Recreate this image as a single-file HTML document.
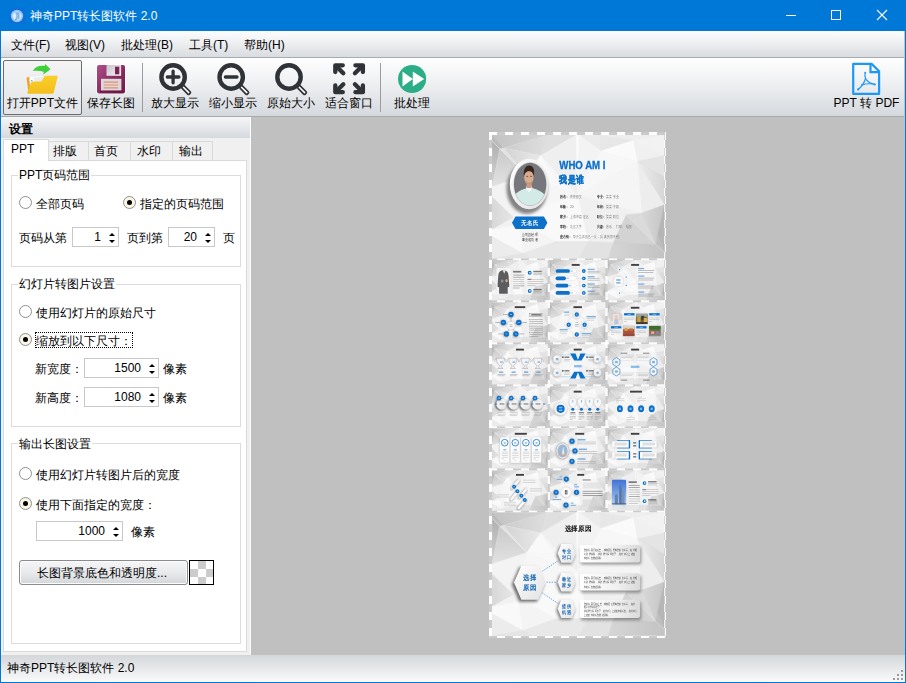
<!DOCTYPE html>
<html lang="zh">
<head>
<meta charset="utf-8">
<title>神奇PPT转长图软件 2.0</title>
<style>
*{box-sizing:border-box;margin:0;padding:0}
html,body{width:906px;height:683px;overflow:hidden;background:#c0c0c0}
body{font-family:"Liberation Sans",sans-serif;font-size:12px;color:#000;position:relative}
.abs,.t{position:absolute}
.t{white-space:nowrap;line-height:14px;height:14px}
#win{position:absolute;left:0;top:0;width:906px;height:683px;background:#c0c0c0;overflow:hidden}
#title{left:0;top:0;width:906px;height:31px;background:#0078d7}
#title .t{color:#fff;font-size:12px}
#menu{left:1px;top:31px;width:904px;height:26px;background:linear-gradient(#fdfdfd 0%,#f0f1f3 40%,#d9dce0 100%)}
#menuline{left:1px;top:57px;width:904px;height:1px;background:#a9abae}
#tool{left:1px;top:58px;width:904px;height:58px;background:linear-gradient(#fefefe 0%,#f2f3f5 35%,#d5d9dd 100%)}
#toolline{left:1px;top:116px;width:904px;height:1px;background:#a6a8ab}
.tb{text-align:center;transform:translateX(-50%)}
.sep{width:1px;background:#9a9ca0;top:63px;height:49px}
#panel{left:1px;top:117px;width:250px;height:538px;background:#f0f0f0}
#hdr{left:1px;top:117px;width:250px;height:21px;background:linear-gradient(#f4f5f6 0%,#e6e8eb 50%,#d5d9de 100%)}
.tab{top:141px;height:19px;background:#f0f0f0;border:1px solid #d9d9d9;border-bottom:none}
.tab .t{top:2px}
#tabc{left:3px;top:160px;width:244px;height:492px;background:#fff;border:1px solid #dadada}
.gb{border:1px solid #dcdcdc;background:transparent}
.gt{background:#fff;padding:0 1px}
.radio{width:13px;height:13px;border-radius:50%;border:1px solid #8e8f8f;background:#fff}
.radio.on{background:#fbf6e4}
.radio.on:after{content:"";position:absolute;left:3px;top:3px;width:5px;height:5px;border-radius:50%;background:#000}
.spin{height:20px;background:#fff;border:1px solid #c8c8c8}
.spin .v{position:absolute;top:2px;line-height:14px;text-align:right;color:#000}
.spin i{position:absolute;width:0;height:0;border-left:3px solid transparent;border-right:3px solid transparent}
.spin i.u{top:5px;border-bottom:3px solid #000}
.spin i.d{top:12px;border-top:3px solid #000}
#status{left:1px;top:655px;width:904px;height:27px;background:linear-gradient(#d3d7da 0%,#e5e7e9 45%,#fafafa 100%)}
</style>
</head>
<body>
<div id="win">
<!-- title bar -->
<div class="abs" id="title">
  <svg class="abs" style="left:9px;top:8px" width="16" height="16" viewBox="0 0 16 16"><rect x="0" y="0" width="16" height="16" rx="3" fill="#0a6fd8"/><circle cx="8" cy="8" r="6.2" fill="#8fc0f2"/><circle cx="8" cy="8" r="4.6" fill="#d8e9fb"/><path d="M6.2 5h3.6v6M8 5v6l-2 .6" stroke="#5b9fe6" stroke-width="1.1" fill="none"/></svg>
  <div class="t" style="left:30px;top:9px">神奇PPT转长图软件 2.0</div>
  <svg class="abs" style="left:780px;top:5px" width="112" height="20" viewBox="0 0 112 20"><path d="M6 10.5h10" stroke="#fff" stroke-width="1"/><rect x="51.5" y="5.5" width="9" height="9" fill="none" stroke="#fff" stroke-width="1"/><path d="M97 5l10 10M107 5l-10 10" stroke="#fff" stroke-width="1.1"/></svg>
</div>
<!-- menu bar -->
<div class="abs" id="menu"></div>
<div class="abs" id="menuline"></div>
<div class="t" style="left:11px;top:38px">文件(F)</div>
<div class="t" style="left:65px;top:38px">视图(V)</div>
<div class="t" style="left:121px;top:38px">批处理(B)</div>
<div class="t" style="left:189px;top:38px">工具(T)</div>
<div class="t" style="left:244px;top:38px">帮助(H)</div>
<!-- toolbar -->
<div class="abs" id="tool"></div>
<div class="abs" id="toolline"></div>
<div class="abs" style="left:3px;top:60px;width:79px;height:55px;border:1px solid #6e6e6e;border-radius:2px;background:linear-gradient(#f4f4f5,#e2e4e7)"></div>
<div id="icons"><svg class="abs" style="left:0;top:58px" width="906" height="58" viewBox="0 58 906 58">
<defs>
<linearGradient id="gfold" x1="0" y1="0" x2="0" y2="1"><stop offset="0" stop-color="#f9cf2a"/><stop offset="1" stop-color="#f3be1b"/></linearGradient>
<linearGradient id="gsave" x1="0" y1="0" x2="1" y2="1"><stop offset="0" stop-color="#b04f8a"/><stop offset="0.5" stop-color="#8c2d63"/><stop offset="1" stop-color="#6e1a47"/></linearGradient>
<linearGradient id="gshut" x1="0" y1="0" x2="1" y2="1"><stop offset="0" stop-color="#c9c3cc"/><stop offset="1" stop-color="#f4f2f5"/></linearGradient>
<g id="mag"><circle cx="14.1" cy="14" r="11.7" fill="none" stroke="#2f3337" stroke-width="4.4"/><rect x="13.2" y="-1.65" width="10.3" height="3.3" rx="1" transform="translate(14.1 14) rotate(45)" fill="#fff" stroke="#2f3337" stroke-width="1.7"/></g>
<g id="arr" fill="none" stroke="#2f3337" stroke-width="4.3" stroke-linecap="round" stroke-linejoin="round"><path d="M9.8 2.3H2.3V9"/><path d="M3 3l7.3 7.3"/></g>
</defs>
<!-- open folder -->
<path d="M26.6 78.5q0-1.5 1.5-1.5h6l1.5 1.5h8v14H28.5z" fill="#f0a32c"/>
<path d="M29.2 76.5l14-1.6 1.6 7.5-14.5 4z" fill="#fdfdfd" stroke="#d8dde3" stroke-width="0.5"/>
<path d="M33.8 77.4l12.4-1.2 1.2 6-12.2 3z" fill="#e9edf1"/>
<rect x="31.2" y="80.2" width="1.2" height="1.2" fill="#2a8ee0"/>
<path d="M27.3 92.6L31.2 82.5q.4-1 1.5-1h8.6l3.2-5q.5-.8 1.500-.8h10.600q1.400 0 1 1.400L53.800 92.400q-.4 1.300-1.700 1.300H28.200q-1.300 0-.9-1.100z" fill="url(#gfold)"/>
<path d="M32.800 71C35.300 66.600 40 65.200 44.700 66.100L45.200 64 50.500 69.300 43.300 74.500 43.700 71.700C40 70.500 36.500 70.400 32.800 71z" fill="#3fcf3a"/>
<!-- save -->
<rect x="96.200" y="64.300" width="29.600" height="29.800" rx="2.600" fill="#fff" opacity="0.9"/>
<rect x="97" y="65" width="28" height="28.400" rx="2" fill="url(#gsave)"/>
<rect x="106.500" y="65" width="14.600" height="10.800" fill="url(#gshut)"/>
<rect x="115" y="66.700" width="4.300" height="7.600" fill="#7d2456"/>
<rect x="101" y="78.800" width="20.400" height="11.600" fill="#dcd9dd"/>
<path d="M103.600 82.200h14.600M103.600 85h14.600M103.600 87.800h14.600" stroke="#e58e6c" stroke-width="1.200"/>
<rect x="100" y="91" width="22.500" height="1.600" fill="#5e143b" opacity="0.6"/>
<!-- zoom in -->
<use href="#mag" x="159" y="63"/>
<path d="M167.300 77h11.600M173.100 71.200v11.600" stroke="#2f3337" stroke-width="3.300" stroke-linecap="round"/>
<!-- zoom out -->
<use href="#mag" x="217.100" y="63"/>
<path d="M225.400 77h11.600" stroke="#2f3337" stroke-width="3.300" stroke-linecap="round"/>
<!-- original -->
<use href="#mag" x="274.900" y="63"/>
<!-- fit -->
<use href="#arr" x="333" y="63"/>
<use href="#arr" transform="translate(365.200 63) scale(-1 1)"/>
<use href="#arr" transform="translate(333 94.500) scale(1 -1)"/>
<use href="#arr" transform="translate(365.200 94.500) scale(-1 -1)"/>
<!-- batch -->
<circle cx="412.100" cy="79" r="14.050" fill="#2bae87"/>
<path d="M402.500 71.400L412.800 79 402.500 86.500zM412.800 71.400L424.200 79 412.800 86.500z" fill="#fff"/>
<!-- pdf -->
<path d="M853.200 63.900h18.400l7.500 7.300v22.600h-25.900z" fill="none" stroke="#1e98f5" stroke-width="2.200" stroke-linejoin="round"/>
<path d="M870.500 64v8.200h8.600" fill="none" stroke="#1e98f5" stroke-width="2.200"/>
<g fill="none" stroke="#1e98f5" stroke-width="1.200" stroke-linecap="round"><path d="M865.200 72.800C864 78.500 867 83 875 84.400"/><path d="M865.500 78.500C864.300 83 861.300 87 857.900 89.600"/><path d="M861.700 84.900C865 83.900 869 83.500 872.500 84"/></g>
<circle cx="858.200" cy="89.400" r="1.100" fill="#1e98f5"/><circle cx="874.600" cy="84.500" r="1.100" fill="#1e98f5"/><circle cx="865.300" cy="72.700" r="0.900" fill="#1e98f5"/>
</svg>
</div>
<div class="t tb" style="left:42.5px;top:96px">打开PPT文件</div>
<div class="t tb" style="left:111px;top:96px">保存长图</div>
<div class="abs sep" style="left:142px"></div>
<div class="t tb" style="left:175px;top:96px">放大显示</div>
<div class="t tb" style="left:233px;top:96px">缩小显示</div>
<div class="t tb" style="left:290.5px;top:96px">原始大小</div>
<div class="t tb" style="left:348.5px;top:96px">适合窗口</div>
<div class="abs sep" style="left:380px"></div>
<div class="t tb" style="left:412px;top:96px">批处理</div>
<div class="t tb" style="left:866.5px;top:96px">PPT 转 PDF</div>
<!-- left panel -->
<div class="abs" id="panel"></div>
<div class="abs" id="hdr"></div>
<div class="t" style="left:9px;top:122px;font-weight:bold">设置</div>
<div class="abs tab" style="left:48px;width:41px"><div class="t" style="left:4px">排版</div></div>
<div class="abs tab" style="left:88px;width:43px"><div class="t" style="left:5px">首页</div></div>
<div class="abs tab" style="left:130px;width:43px"><div class="t" style="left:6px">水印</div></div>
<div class="abs tab" style="left:172px;width:41px"><div class="t" style="left:6px">输出</div></div>
<div class="abs" id="tabc"></div>
<div class="abs" style="left:3px;top:139px;width:46px;height:22px;background:#fff;border:1px solid #dadada;border-bottom:none"></div>
<div class="t" style="left:11px;top:142px">PPT</div>
<!-- group 1 -->
<div class="abs gb" style="left:11px;top:175px;width:230px;height:92px"></div>
<div class="t gt" style="left:18px;top:168px">PPT页码范围</div>
<div class="abs radio" style="left:19px;top:196px"></div>
<div class="t" style="left:36px;top:197px">全部页码</div>
<div class="abs radio on" style="left:123px;top:196px"></div>
<div class="t" style="left:140px;top:197px">指定的页码范围</div>
<div class="t" style="left:19px;top:231px">页码从第</div>
<div class="abs spin" style="left:72px;top:227px;width:47px"><div class="v" style="right:17px">1</div><i class="u" style="left:36px"></i><i class="d" style="left:36px"></i></div>
<div class="t" style="left:127px;top:231px">页到第</div>
<div class="abs spin" style="left:168px;top:227px;width:47px"><div class="v" style="right:17px">20</div><i class="u" style="left:36px"></i><i class="d" style="left:36px"></i></div>
<div class="t" style="left:223px;top:231px">页</div>
<!-- group 2 -->
<div class="abs gb" style="left:11px;top:284px;width:230px;height:143px"></div>
<div class="t gt" style="left:18px;top:277px">幻灯片转图片设置</div>
<div class="abs radio" style="left:19px;top:305px"></div>
<div class="t" style="left:36px;top:306px">使用幻灯片的原始尺寸</div>
<div class="abs radio on" style="left:19px;top:333px"></div>
<div class="abs" style="left:35px;top:332px;width:98px;height:16px;border:1px dotted #000"></div>
<div class="t" style="left:36px;top:334px">缩放到以下尺寸：</div>
<div class="t" style="left:35px;top:362px">新宽度：</div>
<div class="abs spin" style="left:84px;top:358px;width:75px"><div class="v" style="right:17px">1500</div><i class="u" style="left:64px"></i><i class="d" style="left:64px"></i></div>
<div class="t" style="left:163px;top:362px">像素</div>
<div class="t" style="left:35px;top:391px">新高度：</div>
<div class="abs spin" style="left:84px;top:387px;width:75px"><div class="v" style="right:17px">1080</div><i class="u" style="left:64px"></i><i class="d" style="left:64px"></i></div>
<div class="t" style="left:163px;top:391px">像素</div>
<!-- group 3 -->
<div class="abs gb" style="left:11px;top:443px;width:230px;height:201px"></div>
<div class="t gt" style="left:18px;top:437px">输出长图设置</div>
<div class="abs radio" style="left:19px;top:467px"></div>
<div class="t" style="left:36px;top:468px">使用幻灯片转图片后的宽度</div>
<div class="abs radio on" style="left:19px;top:497px"></div>
<div class="t" style="left:36px;top:498px">使用下面指定的宽度：</div>
<div class="abs spin" style="left:36px;top:521px;width:87px"><div class="v" style="right:17px">1000</div><i class="u" style="left:76px"></i><i class="d" style="left:76px"></i></div>
<div class="t" style="left:131px;top:525px">像素</div>
<div class="abs" style="left:19px;top:560px;width:169px;height:25px;border:1px solid #8a8c8f;border-radius:3px;background:linear-gradient(#f5f5f6 0%,#e9eaec 50%,#d3d6d9 100%);box-shadow:inset 0 0 0 1px #fbfbfb"></div>
<div class="t" style="left:37px;top:566px">长图背景底色和透明度...</div>
<svg class="abs" style="left:189px;top:560px" width="25" height="25" viewBox="0 0 25 25"><rect x="0.5" y="0.5" width="24" height="24" fill="#fff" stroke="#000"/><rect x="9" y="1" width="8" height="8" fill="#ccc"/><rect x="1" y="9" width="8" height="8" fill="#ccc"/><rect x="17" y="9" width="7" height="8" fill="#ccc"/><rect x="9" y="17" width="8" height="7" fill="#ccc"/></svg>
<div class="abs" id="x250" style="left:250px;top:117px;width:1px;height:537px;background:#fcfcfc"></div>
<!-- status bar -->
<div class="abs" id="status"></div>
<div class="t" style="left:7px;top:661px">神奇PPT转长图软件 2.0</div>
<svg class="abs" id="grip" style="left:892px;top:669px" width="12" height="12" viewBox="0 0 12 12" fill="#9a9a9a"><rect x="9" y="1" width="2" height="2"/><rect x="5" y="5" width="2" height="2"/><rect x="9" y="5" width="2" height="2"/><rect x="1" y="9" width="2" height="2"/><rect x="5" y="9" width="2" height="2"/><rect x="9" y="9" width="2" height="2"/></svg>
<!-- preview -->
<div id="preview"><svg class="abs" style="left:489px;top:132px" width="177" height="506" viewBox="489 132 177 506" font-family="'Liberation Sans',sans-serif">
<defs>
<symbol id="bg" viewBox="0 0 172.3 123.5" preserveAspectRatio="none">
<rect width="172.3" height="123.5" fill="#ececec"/>
<linearGradient id="bgg0" x1="0" y1="0" x2="1" y2="0"><stop offset="0" stop-color="#c3c3c3"/><stop offset="1" stop-color="#d4d4d4"/></linearGradient>
<polygon points="0.0,0.0 55.6,0.0 11.4,13.1" fill="url(#bgg0)" stroke="#d4d4d4" stroke-width="0.3"/>
<polygon points="0.0,0.0 11.4,13.1 7.9,13.9 0.0,5.9" fill="#bbbbbb" stroke="#bbbbbb" stroke-width="0.4"/>
<linearGradient id="bgg1" x1="0" y1="0" x2="0" y2="1"><stop offset="0" stop-color="#b0b0b0"/><stop offset="1" stop-color="#d2d2d2"/></linearGradient>
<polygon points="0.0,5.9 7.9,13.9 0.0,51.8" fill="url(#bgg1)" stroke="#d2d2d2" stroke-width="0.3"/>
<linearGradient id="bgg2" x1="0" y1="0" x2="1" y2="0"><stop offset="0" stop-color="#cccccc"/><stop offset="1" stop-color="#dedede"/></linearGradient>
<polygon points="11.4,13.1 55.6,0.0 48.7,20.6" fill="url(#bgg2)" stroke="#dedede" stroke-width="0.3"/>
<linearGradient id="bgg3" x1="0" y1="0" x2="1" y2="0"><stop offset="0" stop-color="#d2d2d2"/><stop offset="1" stop-color="#e9e9e9"/></linearGradient>
<polygon points="11.4,13.1 48.7,20.6 34.8,40.4" fill="url(#bgg3)" stroke="#e9e9e9" stroke-width="0.3"/>
<polygon points="7.9,13.9 11.4,13.1 34.8,40.4" fill="#e2e2e2" stroke="#e2e2e2" stroke-width="0.4"/>
<linearGradient id="bgg4" x1="0" y1="0" x2="0" y2="1"><stop offset="0" stop-color="#c9c9c9"/><stop offset="1" stop-color="#e2e2e2"/></linearGradient>
<polygon points="7.9,13.9 34.8,40.4 0.0,51.8" fill="url(#bgg4)" stroke="#e2e2e2" stroke-width="0.3"/>
<polygon points="55.6,0.0 84.0,0.0 48.7,20.6" fill="#dfdfdf" stroke="#dfdfdf" stroke-width="0.4"/>
<polygon points="48.7,20.6 84.0,0.0 85.5,60.0" fill="#efefef" stroke="#efefef" stroke-width="0.4"/>
<polygon points="48.7,20.6 85.5,60.0 61.6,41.4" fill="#f5f5f5" stroke="#f5f5f5" stroke-width="0.4"/>
<polygon points="48.7,20.6 61.6,41.4 34.8,40.4" fill="#f9f9f9" stroke="#f9f9f9" stroke-width="0.4"/>
<polygon points="84.0,0.0 87.5,0.0 85.5,60.0" fill="#fafafa" stroke="#fafafa" stroke-width="0.4"/>
<polygon points="87.5,0.0 108.0,0.0 108.8,16.1" fill="#ebebeb" stroke="#ebebeb" stroke-width="0.4"/>
<polygon points="87.5,0.0 108.8,16.1 85.5,60.0" fill="#f3f3f3" stroke="#f3f3f3" stroke-width="0.4"/>
<polygon points="108.0,0.0 141.6,5.2 108.8,16.1" fill="#e7e7e7" stroke="#e7e7e7" stroke-width="0.4"/>
<polygon points="108.0,0.0 172.3,0.0 141.6,5.2" fill="#eeeeee" stroke="#eeeeee" stroke-width="0.4"/>
<polygon points="141.6,5.2 172.3,0.0 172.3,20.6" fill="#f2f2f2" stroke="#f2f2f2" stroke-width="0.4"/>
<polygon points="108.8,16.1 141.6,5.2 145.6,26.5" fill="#fafafa" stroke="#fafafa" stroke-width="0.4"/>
<polygon points="141.6,5.2 172.3,20.6 145.6,26.5" fill="#f0f0f0" stroke="#f0f0f0" stroke-width="0.4"/>
<polygon points="108.8,16.1 145.6,26.5 85.5,60.0" fill="#f7f7f7" stroke="#f7f7f7" stroke-width="0.4"/>
<polygon points="145.6,26.5 172.3,20.6 172.3,42.0" fill="#e4e4e4" stroke="#e4e4e4" stroke-width="0.4"/>
<linearGradient id="bgg5" x1="0" y1="0" x2="1" y2="0"><stop offset="0" stop-color="#ececec"/><stop offset="1" stop-color="#d6d6d6"/></linearGradient>
<polygon points="145.6,26.5 172.3,42.0 172.3,69.7" fill="url(#bgg5)" stroke="#d6d6d6" stroke-width="0.3"/>
<polygon points="145.6,26.5 172.3,69.7 149.7,78.1" fill="#ededed" stroke="#ededed" stroke-width="0.4"/>
<polygon points="145.6,26.5 149.7,78.1 85.5,60.0" fill="#f5f5f5" stroke="#f5f5f5" stroke-width="0.4"/>
<polygon points="85.5,60.0 149.7,78.1 133.8,79.6" fill="#f1f1f1" stroke="#f1f1f1" stroke-width="0.4"/>
<linearGradient id="bgg6" x1="0" y1="0" x2="1" y2="0"><stop offset="0" stop-color="#d9d9d9"/><stop offset="1" stop-color="#c5c5c5"/></linearGradient>
<polygon points="149.7,78.1 172.3,69.7 165.5,100.0 163.7,109.5" fill="url(#bgg6)" stroke="#c5c5c5" stroke-width="0.3"/>
<polygon points="172.3,69.7 172.3,117.5 165.5,100.0" fill="#b6b6b6" stroke="#b6b6b6" stroke-width="0.4"/>
<polygon points="165.5,100.0 172.3,117.5 163.7,109.5" fill="#bfbfbf" stroke="#bfbfbf" stroke-width="0.4"/>
<polygon points="133.8,79.6 149.7,78.1 163.7,109.5" fill="#dadada" stroke="#dadada" stroke-width="0.4"/>
<polygon points="133.8,79.6 163.7,109.5 120.9,107.5" fill="#d3d3d3" stroke="#d3d3d3" stroke-width="0.4"/>
<linearGradient id="bgg7" x1="0" y1="0" x2="1" y2="0"><stop offset="0" stop-color="#d6d6d6"/><stop offset="1" stop-color="#c3c3c3"/></linearGradient>
<polygon points="120.9,107.5 163.7,109.5 172.3,117.5 172.3,123.5 115.9,123.5" fill="url(#bgg7)" stroke="#c3c3c3" stroke-width="0.3"/>
<polygon points="85.5,60.0 133.8,79.6 120.9,107.5 96.0,106.5" fill="#f0f0f0" stroke="#f0f0f0" stroke-width="0.4"/>
<polygon points="96.0,106.5 120.9,107.5 115.9,123.5 86.0,123.5" fill="#e2e2e2" stroke="#e2e2e2" stroke-width="0.4"/>
<polygon points="0.0,51.8 34.8,40.4 21.9,82.6 0.0,61.7" fill="#f3f3f3" stroke="#f3f3f3" stroke-width="0.4"/>
<linearGradient id="bgg8" x1="0" y1="0" x2="1" y2="0"><stop offset="0" stop-color="#d8d8d8"/><stop offset="1" stop-color="#e6e6e6"/></linearGradient>
<polygon points="0.0,61.7 21.9,82.6 0.0,94.6" fill="url(#bgg8)" stroke="#e6e6e6" stroke-width="0.3"/>
<polygon points="34.8,40.4 61.6,41.4 85.5,60.0" fill="#f8f8f8" stroke="#f8f8f8" stroke-width="0.4"/>
<polygon points="34.8,40.4 85.5,60.0 21.9,82.6" fill="#f6f6f6" stroke="#f6f6f6" stroke-width="0.4"/>
<polygon points="21.9,82.6 85.5,60.0 96.0,106.5 63.7,106.5" fill="#f9f9f9" stroke="#f9f9f9" stroke-width="0.4"/>
<polygon points="21.9,82.6 63.7,106.5 26.9,89.6" fill="#f5f5f5" stroke="#f5f5f5" stroke-width="0.4"/>
<polygon points="21.9,82.6 26.9,89.6 0.0,94.6" fill="#f2f2f2" stroke="#f2f2f2" stroke-width="0.4"/>
<polygon points="0.0,94.6 26.9,89.6 30.9,118.5 0.0,101.5" fill="#f9f9f9" stroke="#f9f9f9" stroke-width="0.4"/>
<polygon points="0.0,101.5 30.9,118.5 0.0,123.5" fill="#ececec" stroke="#ececec" stroke-width="0.4"/>
<polygon points="26.9,89.6 63.7,106.5 30.9,118.5" fill="#f4f4f4" stroke="#f4f4f4" stroke-width="0.4"/>
<polygon points="30.9,118.5 63.7,106.5 96.0,106.5 86.0,123.5 40.0,123.5" fill="#e8e8e8" stroke="#e8e8e8" stroke-width="0.4"/>
<polygon points="30.9,118.5 40.0,123.5 0.0,123.5" fill="#e4e4e4" stroke="#e4e4e4" stroke-width="0.4"/>
<path d="M0 5.9L7.900 13.900 34.800 40.400" fill="none" stroke="#f2f2f2" stroke-width="0.600" opacity="0.8"/>
<path d="M133.800 79.600L172.300 117.500" fill="none" stroke="#f0f0f0" stroke-width="0.500" opacity="0.7"/>
</symbol>
<filter id="bl" x="-5%" y="-5%" width="110%" height="110%"><feGaussianBlur stdDeviation="0.35"/></filter>
<filter id="bl2" x="-20%" y="-20%" width="140%" height="140%"><feGaussianBlur stdDeviation="0.9"/></filter>
<filter id="bl3" x="-30%" y="-30%" width="160%" height="160%"><feGaussianBlur stdDeviation="1.6"/></filter>
<linearGradient id="gw" x1="0" y1="0" x2="1" y2="1"><stop offset="0" stop-color="#ffffff"/><stop offset="1" stop-color="#e2e2e2"/></linearGradient>
<linearGradient id="gbox" x1="0" y1="0" x2="1" y2="0"><stop offset="0" stop-color="#ffffff"/><stop offset="0.6" stop-color="#f1f1f1"/><stop offset="1" stop-color="#d9d9d9"/></linearGradient>
<linearGradient id="gsky" x1="0" y1="0" x2="0" y2="1"><stop offset="0" stop-color="#3f73d6"/><stop offset="0.6" stop-color="#7fa8e6"/><stop offset="1" stop-color="#b7cdea"/></linearGradient>
<clipPath id="cpp"><ellipse cx="530.1" cy="184.2" rx="16.2" ry="21.4"/></clipPath>
<clipPath id="cpall"><rect x="489" y="132" width="177" height="506"/></clipPath>
<pattern id="chk" x="489" y="132" width="16" height="16" patternUnits="userSpaceOnUse"><rect width="16" height="16" fill="#fff"/><rect x="8" width="8" height="8" fill="#cacaca"/><rect y="8" width="8" height="8" fill="#cacaca"/></pattern>
</defs>
<rect x="489.00" y="132.00" width="177.00" height="506.00" fill="url(#chk)"/>
<g clip-path="url(#cpall)"><g filter="url(#bl)">
<use href="#bg" x="492.00" y="135.00" width="172.30" height="123.60"/>
<use href="#bg" x="492.00" y="512.30" width="172.30" height="123.40"/>
<use href="#bg" x="492.00" y="260.10" width="55.80" height="40.30"/>
<use href="#bg" x="549.70" y="260.10" width="55.80" height="40.30"/>
<use href="#bg" x="607.50" y="260.10" width="56.80" height="40.30"/>
<use href="#bg" x="492.00" y="302.15" width="55.80" height="40.30"/>
<use href="#bg" x="549.70" y="302.15" width="55.80" height="40.30"/>
<use href="#bg" x="607.50" y="302.15" width="56.80" height="40.30"/>
<use href="#bg" x="492.00" y="344.20" width="55.80" height="40.30"/>
<use href="#bg" x="549.70" y="344.20" width="55.80" height="40.30"/>
<use href="#bg" x="607.50" y="344.20" width="56.80" height="40.30"/>
<use href="#bg" x="492.00" y="386.25" width="55.80" height="40.30"/>
<use href="#bg" x="549.70" y="386.25" width="55.80" height="40.30"/>
<use href="#bg" x="607.50" y="386.25" width="56.80" height="40.30"/>
<use href="#bg" x="492.00" y="428.30" width="55.80" height="40.30"/>
<use href="#bg" x="549.70" y="428.30" width="55.80" height="40.30"/>
<use href="#bg" x="607.50" y="428.30" width="56.80" height="40.30"/>
<use href="#bg" x="492.00" y="470.35" width="55.80" height="40.30"/>
<use href="#bg" x="549.70" y="470.35" width="55.80" height="40.30"/>
<use href="#bg" x="607.50" y="470.35" width="56.80" height="40.30"/>
<ellipse cx="527.00" cy="188.50" rx="20.50" ry="25.50" fill="#555" filter="url(#bl3)" opacity="0.7"/>
<ellipse cx="529.20" cy="184.00" rx="19.40" ry="25.20" fill="url(#gw)"/>
<ellipse cx="530.10" cy="184.20" rx="16.90" ry="22.10" fill="#d9d9d9"/>
<g clip-path="url(#cpp)">
<rect x="513.00" y="162.00" width="35.00" height="45.00" fill="#76767c"/>
<path d="M513 207V197C516 192 522 189.500 526 188.500L529 191 532.500 188.300C538 189.500 544 192.500 547 198V207z" fill="#d3ebe7"/>
<path d="M525.800 188.600L529 192.500 532.600 188.400 531.500 185.500H526.800z" fill="#f4f7f6"/>
<rect x="526.60" y="181.00" width="5.00" height="7.00" fill="#c99a80"/>
<ellipse cx="528.90" cy="177.60" rx="4.70" ry="6.90" fill="#d9ab90"/>
<path d="M523.900 176.500C523 169 526 165.400 529.300 165.500 533.200 165.600 535 169.500 533.800 176 533 172.500 532 171 529 171.200 526.500 171.300 524.800 172.500 523.900 176.500z" fill="#35281f"/>
<path d="M526.300 176.400h1.900M530.200 176.400h1.900" stroke="#4a3428" stroke-width="0.700"/>
<path d="M525 180c1 3.500 6.500 3.500 7.800 0l-.500 2.500c-1.500 2.200-5.300 2.200-6.800 0z" fill="#b88a72" opacity="0.700"/>
</g>
<polygon points="512.00,222.80 515.50,216.60 543.90,216.60 547.40,222.80 543.90,229.00 515.50,229.00" fill="#0b6fc9"/>
<text transform="translate(529.70 225.10) scale(0.920 1)" font-size="6.20" fill="#fff" text-anchor="middle" font-weight="bold" textLength="18.48" lengthAdjust="spacingAndGlyphs">无名氏</text>
<text transform="translate(529.70 236.20) scale(0.840 1)" font-size="3.90" fill="#2a2a2a" text-anchor="middle" textLength="19.52" lengthAdjust="spacingAndGlyphs">公司总经理</text>
<text transform="translate(529.70 241.00) scale(0.840 1)" font-size="3.90" fill="#2a2a2a" text-anchor="middle" textLength="19.52" lengthAdjust="spacingAndGlyphs">事业成功者</text>
<text transform="translate(559.30 169.10) scale(0.825 1)" font-size="11.20" fill="#0b6fc9" text-anchor="start" font-weight="bold" textLength="56.00" lengthAdjust="spacingAndGlyphs" stroke="#0b6fc9" stroke-width="0.35">WHO AM I</text>
<text transform="translate(559.30 183.20) scale(0.830 1)" font-size="10.40" fill="#0b6fc9" text-anchor="start" font-weight="bold" textLength="31.08" lengthAdjust="spacingAndGlyphs" stroke="#0b6fc9" stroke-width="0.3">我是谁</text>
<text transform="translate(559.80 198.25) scale(0.800 1)" font-size="4.10" fill="#222" text-anchor="start" font-weight="bold" textLength="9.62" lengthAdjust="spacingAndGlyphs" opacity="0.9">姓名:</text>
<text transform="translate(569.90 198.25) scale(0.780 1)" font-size="4.00" fill="#777" text-anchor="start" textLength="15.64" lengthAdjust="spacingAndGlyphs">亮亮图文</text>
<text transform="translate(597.00 198.25) scale(0.800 1)" font-size="4.10" fill="#222" text-anchor="start" font-weight="bold" textLength="9.00" lengthAdjust="spacingAndGlyphs" opacity="0.9">专业:</text>
<text transform="translate(606.10 198.25) scale(0.780 1)" font-size="4.00" fill="#777" text-anchor="start" textLength="16.67" lengthAdjust="spacingAndGlyphs">某某专业</text>
<text transform="translate(559.80 207.75) scale(0.800 1)" font-size="4.10" fill="#222" text-anchor="start" font-weight="bold" textLength="9.62" lengthAdjust="spacingAndGlyphs" opacity="0.9">年龄:</text>
<text transform="translate(569.90 207.75) scale(0.780 1)" font-size="4.00" fill="#777" text-anchor="start" textLength="4.62" lengthAdjust="spacingAndGlyphs">20</text>
<text transform="translate(597.00 207.75) scale(0.800 1)" font-size="4.10" fill="#222" text-anchor="start" font-weight="bold" textLength="9.00" lengthAdjust="spacingAndGlyphs" opacity="0.9">年级:</text>
<text transform="translate(606.10 207.75) scale(0.780 1)" font-size="4.00" fill="#777" text-anchor="start" textLength="16.67" lengthAdjust="spacingAndGlyphs">某某年级</text>
<text transform="translate(559.80 218.05) scale(0.800 1)" font-size="4.10" fill="#222" text-anchor="start" font-weight="bold" textLength="9.62" lengthAdjust="spacingAndGlyphs" opacity="0.9">家乡:</text>
<text transform="translate(569.90 218.05) scale(0.780 1)" font-size="4.00" fill="#777" text-anchor="start" textLength="24.36" lengthAdjust="spacingAndGlyphs">上海市嘉定区</text>
<text transform="translate(597.00 218.05) scale(0.800 1)" font-size="4.10" fill="#222" text-anchor="start" font-weight="bold" textLength="9.00" lengthAdjust="spacingAndGlyphs" opacity="0.9">职位:</text>
<text transform="translate(606.10 218.05) scale(0.780 1)" font-size="4.00" fill="#777" text-anchor="start" textLength="16.67" lengthAdjust="spacingAndGlyphs">某某职位</text>
<text transform="translate(559.80 227.85) scale(0.800 1)" font-size="4.10" fill="#222" text-anchor="start" font-weight="bold" textLength="9.62" lengthAdjust="spacingAndGlyphs" opacity="0.9">学校:</text>
<text transform="translate(569.90 227.85) scale(0.780 1)" font-size="4.00" fill="#777" text-anchor="start" textLength="15.64" lengthAdjust="spacingAndGlyphs">北京大学</text>
<text transform="translate(597.00 227.85) scale(0.800 1)" font-size="4.10" fill="#222" text-anchor="start" font-weight="bold" textLength="9.00" lengthAdjust="spacingAndGlyphs" opacity="0.9">兴趣:</text>
<text transform="translate(606.10 227.85) scale(0.780 1)" font-size="4.00" fill="#777" text-anchor="start" textLength="33.33" lengthAdjust="spacingAndGlyphs">音乐、打球、唱歌</text>
<text transform="translate(559.80 237.75) scale(0.800 1)" font-size="4.10" fill="#222" text-anchor="start" font-weight="bold" textLength="13.50" lengthAdjust="spacingAndGlyphs" opacity="0.9">座右铭:</text>
<text transform="translate(572.60 237.75) scale(0.780 1)" font-size="4.00" fill="#777" text-anchor="start" textLength="63.46" lengthAdjust="spacingAndGlyphs">每天告诉自己一次，我真的很不错。</text>
<rect x="496.30" y="267.90" width="15.60" height="27.60" fill="#d8d8d8" rx="1.20" filter="url(#bl2)" opacity="0.8"/>
<rect x="496.50" y="268.10" width="15.00" height="26.70" fill="#f4f4f4" rx="1.20"/>
<path d="M502.60 270.30c-2.600 .500-4 2-4.300 5l-.800 10.500c0 1.200 1 1.800 1.600 1.200v6.800h8.600v-6.800c.800 .600 1.600 0 1.600-1.200l-.800-10.500c-.300-3-1.700-4.500-4.300-5z" fill="#5c5c5e"/>
<rect x="503.30" y="269.70" width="1.80" height="2.20" fill="#e8c8b4"/>
<path d="M503.00 270.40l1.200 3.600 1.200-3.600z" fill="#e9e9ea"/>
<ellipse cx="506.60" cy="280.70" rx="1.20" ry="1.60" fill="#d6a58f"/>
<ellipse cx="502.20" cy="281.10" rx="1.40" ry="1.70" fill="#8f8f93"/>
<rect x="513.10" y="270.85" width="8.20" height="1.70" fill="#1a1a1a" opacity="0.56"/>
<rect x="513.10" y="274.70" width="11.20" height="0.80" fill="#555" opacity="0.53"/>
<rect x="513.10" y="276.85" width="11.20" height="0.80" fill="#555" opacity="0.53"/>
<rect x="513.10" y="279.00" width="11.20" height="0.80" fill="#9a9a9a" opacity="0.53"/>
<rect x="513.10" y="281.15" width="11.20" height="0.80" fill="#9a9a9a" opacity="0.53"/>
<rect x="513.10" y="283.30" width="11.20" height="0.80" fill="#9a9a9a" opacity="0.53"/>
<rect x="513.10" y="285.45" width="11.20" height="0.80" fill="#555" opacity="0.53"/>
<rect x="513.10" y="287.60" width="6.50" height="0.80" fill="#555" opacity="0.53"/>
<circle cx="529.70" cy="272.80" r="2.90" fill="#fff" opacity="0.95"/>
<circle cx="529.70" cy="272.80" r="2.00" fill="#0b6fc9"/>
<circle cx="529.90" cy="272.80" r="0.80" fill="#fff"/>
<rect x="533.30" y="270.80" width="8.40" height="1.40" fill="#222" opacity="0.56"/>
<rect x="533.30" y="272.95" width="9.00" height="0.70" fill="#999" opacity="0.62"/>
<rect x="533.30" y="274.35" width="9.00" height="0.70" fill="#999" opacity="0.62"/>
<circle cx="529.70" cy="290.90" r="2.90" fill="#fff" opacity="0.95"/>
<circle cx="529.70" cy="290.90" r="2.00" fill="#0b6fc9"/>
<circle cx="529.90" cy="290.90" r="0.80" fill="#fff"/>
<rect x="533.30" y="288.90" width="8.40" height="1.40" fill="#222" opacity="0.56"/>
<rect x="533.30" y="291.05" width="9.00" height="0.70" fill="#999" opacity="0.62"/>
<rect x="533.30" y="292.45" width="9.00" height="0.70" fill="#999" opacity="0.62"/>
<rect x="527.50" y="278.80" width="4.00" height="1.20" fill="#333" opacity="0.56"/>
<rect x="532.00" y="279.05" width="11.50" height="0.70" fill="#a2a2a2" opacity="0.62"/>
<rect x="527.50" y="281.05" width="16.00" height="0.70" fill="#a2a2a2" opacity="0.62"/>
<rect x="527.50" y="283.05" width="16.00" height="0.70" fill="#a2a2a2" opacity="0.62"/>
<rect x="527.50" y="285.05" width="8.00" height="0.70" fill="#a2a2a2" opacity="0.62"/>
<rect x="611.80" y="479.95" width="14.60" height="25.40" fill="#bdbdbd" rx="1.20" filter="url(#bl2)" opacity="0.8"/>
<rect x="612.00" y="479.75" width="14.10" height="24.80" fill="url(#gsky)" rx="1.30"/>
<path d="M614.80 504.15v-9l1.600-1.500 1.500 1.500v9z" fill="#5f83b4"/>
<path d="M619.10 504.15v-18.500l1.200-1.800 1.500 4.500v15.800z" fill="#5878a8"/>
<path d="M622.10 504.15v-13l1.700-2.500 .800 3v12.500z" fill="#7391bd"/>
<rect x="612.00" y="502.95" width="14.10" height="1.60" fill="#4c6688" opacity="0.7"/>
<rect x="612.50" y="505.35" width="13.20" height="3.20" fill="#c5d3e6" opacity="0.35"/>
<rect x="628.60" y="481.30" width="8.20" height="1.70" fill="#1a1a1a" opacity="0.56"/>
<rect x="628.60" y="484.95" width="11.20" height="0.80" fill="#444" opacity="0.53"/>
<rect x="628.60" y="487.20" width="11.20" height="0.80" fill="#444" opacity="0.53"/>
<rect x="628.60" y="489.45" width="11.20" height="0.80" fill="#8a8a8a" opacity="0.53"/>
<rect x="628.60" y="491.70" width="11.20" height="0.80" fill="#8a8a8a" opacity="0.53"/>
<rect x="628.60" y="493.95" width="11.20" height="0.80" fill="#8a8a8a" opacity="0.53"/>
<rect x="628.60" y="496.20" width="11.20" height="0.80" fill="#444" opacity="0.53"/>
<rect x="628.60" y="498.45" width="11.20" height="0.80" fill="#8a8a8a" opacity="0.53"/>
<rect x="628.60" y="500.70" width="11.20" height="0.80" fill="#8a8a8a" opacity="0.53"/>
<rect x="628.60" y="502.95" width="9.50" height="0.80" fill="#8a8a8a" opacity="0.53"/>
<circle cx="644.50" cy="483.05" r="2.80" fill="#fff" opacity="0.95"/>
<circle cx="644.50" cy="483.05" r="1.90" fill="#0b6fc9"/>
<circle cx="644.70" cy="483.05" r="0.80" fill="#fff"/>
<rect x="648.10" y="481.05" width="8.40" height="1.40" fill="#222" opacity="0.56"/>
<rect x="648.10" y="483.20" width="9.00" height="0.70" fill="#999" opacity="0.62"/>
<rect x="648.10" y="484.60" width="9.00" height="0.70" fill="#999" opacity="0.62"/>
<circle cx="644.50" cy="501.15" r="2.80" fill="#fff" opacity="0.95"/>
<circle cx="644.50" cy="501.15" r="1.90" fill="#0b6fc9"/>
<circle cx="644.70" cy="501.15" r="0.80" fill="#fff"/>
<rect x="648.10" y="499.15" width="8.40" height="1.40" fill="#222" opacity="0.56"/>
<rect x="648.10" y="501.30" width="9.00" height="0.70" fill="#999" opacity="0.62"/>
<rect x="648.10" y="502.70" width="9.00" height="0.70" fill="#999" opacity="0.62"/>
<rect x="642.30" y="489.05" width="4.00" height="1.20" fill="#333" opacity="0.56"/>
<rect x="646.80" y="489.30" width="11.50" height="0.70" fill="#a2a2a2" opacity="0.62"/>
<rect x="642.30" y="491.30" width="16.00" height="0.70" fill="#a2a2a2" opacity="0.62"/>
<rect x="642.30" y="493.30" width="16.00" height="0.70" fill="#a2a2a2" opacity="0.62"/>
<rect x="642.30" y="495.30" width="8.00" height="0.70" fill="#a2a2a2" opacity="0.62"/>
<rect x="571.70" y="263.95" width="8.00" height="1.90" fill="#111" opacity="0.78"/>
<path d="M557.40 269.15h17.500l2 1.850-2 1.850h-17.500a1.850 1.850 0 0 1 0-3.700z" fill="#fff" stroke="#d5d5d5" stroke-width="0.3"/>
<rect x="555.60" y="269.15" width="14.40" height="3.70" fill="#0b6fc9" rx="1.85"/>
<rect x="570.60" y="270.40" width="2.20" height="1.20" fill="#3c86d0" opacity="0.50"/>
<path d="M577.20 271.00L581.70 271.00" stroke="#d0d0d0" stroke-width="0.30"/>
<circle cx="583.80" cy="271.00" r="2.80" fill="#fff" opacity="0.95"/>
<circle cx="583.80" cy="271.00" r="1.90" fill="#0b6fc9"/>
<circle cx="583.80" cy="271.00" r="0.60" fill="#fff"/>
<rect x="587.70" y="268.75" width="7.00" height="1.30" fill="#2a7fd0" opacity="0.59"/>
<rect x="587.70" y="270.95" width="11.80" height="0.70" fill="#8a8a8a" opacity="0.62"/>
<rect x="587.70" y="272.55" width="11.80" height="0.70" fill="#8a8a8a" opacity="0.62"/>
<path d="M557.40 276.45h17.500l2 1.850-2 1.850h-17.500a1.850 1.850 0 0 1 0-3.700z" fill="#fff" stroke="#d5d5d5" stroke-width="0.3"/>
<rect x="555.60" y="276.45" width="10.40" height="3.70" fill="#0b6fc9" rx="1.85"/>
<rect x="566.60" y="277.70" width="2.20" height="1.20" fill="#3c86d0" opacity="0.50"/>
<path d="M577.20 278.30L581.70 278.30" stroke="#d0d0d0" stroke-width="0.30"/>
<circle cx="583.80" cy="278.30" r="2.80" fill="#fff" opacity="0.95"/>
<circle cx="583.80" cy="278.30" r="1.90" fill="#0b6fc9"/>
<circle cx="583.80" cy="278.30" r="0.60" fill="#fff"/>
<rect x="587.70" y="276.05" width="7.00" height="1.30" fill="#2a7fd0" opacity="0.59"/>
<rect x="587.70" y="278.25" width="11.80" height="0.70" fill="#8a8a8a" opacity="0.62"/>
<rect x="587.70" y="279.85" width="11.80" height="0.70" fill="#8a8a8a" opacity="0.62"/>
<path d="M557.40 283.75h17.500l2 1.850-2 1.850h-17.500a1.850 1.850 0 0 1 0-3.700z" fill="#fff" stroke="#d5d5d5" stroke-width="0.3"/>
<rect x="555.60" y="283.75" width="12.90" height="3.70" fill="#0b6fc9" rx="1.85"/>
<rect x="569.10" y="285.00" width="2.20" height="1.20" fill="#3c86d0" opacity="0.50"/>
<path d="M577.20 285.60L581.70 285.60" stroke="#d0d0d0" stroke-width="0.30"/>
<circle cx="583.80" cy="285.60" r="2.80" fill="#fff" opacity="0.95"/>
<circle cx="583.80" cy="285.60" r="1.90" fill="#0b6fc9"/>
<circle cx="583.80" cy="285.60" r="0.60" fill="#fff"/>
<rect x="587.70" y="283.35" width="7.00" height="1.30" fill="#2a7fd0" opacity="0.59"/>
<rect x="587.70" y="285.55" width="11.80" height="0.70" fill="#8a8a8a" opacity="0.62"/>
<rect x="587.70" y="287.15" width="11.80" height="0.70" fill="#8a8a8a" opacity="0.62"/>
<path d="M557.40 291.05h17.500l2 1.850-2 1.850h-17.500a1.850 1.850 0 0 1 0-3.700z" fill="#fff" stroke="#d5d5d5" stroke-width="0.3"/>
<rect x="555.60" y="291.05" width="14.40" height="3.70" fill="#0b6fc9" rx="1.85"/>
<rect x="570.60" y="292.30" width="2.20" height="1.20" fill="#3c86d0" opacity="0.50"/>
<path d="M577.20 292.90L581.70 292.90" stroke="#d0d0d0" stroke-width="0.30"/>
<circle cx="583.80" cy="292.90" r="2.80" fill="#fff" opacity="0.95"/>
<circle cx="583.80" cy="292.90" r="1.90" fill="#0b6fc9"/>
<circle cx="583.80" cy="292.90" r="0.60" fill="#fff"/>
<rect x="587.70" y="290.65" width="7.00" height="1.30" fill="#2a7fd0" opacity="0.59"/>
<rect x="587.70" y="292.85" width="11.80" height="0.70" fill="#8a8a8a" opacity="0.62"/>
<rect x="587.70" y="294.45" width="11.80" height="0.70" fill="#8a8a8a" opacity="0.62"/>
<rect x="631.10" y="263.95" width="8.00" height="1.90" fill="#111" opacity="0.78"/>
<path d="M619.70 269.60C629.50 274.10 629.50 288.60 619.70 293.10" fill="none" stroke="#d8d8d8" stroke-width="0.4"/>
<polygon points="613.20,281.40 615.10,276.80 621.70,276.80 623.60,281.40 621.70,286.00 615.10,286.00" fill="#8a8a8a" filter="url(#bl2)" opacity="0.4"/>
<polygon points="613.40,281.40 615.20,276.90 621.60,276.90 623.40,281.40 621.60,285.90 615.20,285.90" fill="#fafafa"/>
<rect x="616.30" y="279.15" width="4.20" height="1.70" fill="#2a7fd0" opacity="0.56"/>
<rect x="616.30" y="281.95" width="4.20" height="1.70" fill="#2a7fd0" opacity="0.56"/>
<circle cx="619.60" cy="269.60" r="1.60" fill="#fff"/>
<rect x="619.00" y="269.00" width="1.20" height="1.20" fill="#2a7fd0"/>
<path d="M621.30 269.60L637.00 268.60" stroke="#dcdcdc" stroke-width="0.30"/>
<rect x="638.20" y="267.95" width="6.00" height="1.30" fill="#2a7fd0" opacity="0.59"/>
<rect x="638.20" y="270.25" width="16.00" height="0.70" fill="#777" opacity="0.62"/>
<rect x="638.20" y="272.15" width="15.00" height="0.70" fill="#777" opacity="0.62"/>
<circle cx="626.20" cy="277.10" r="1.60" fill="#fff"/>
<rect x="625.60" y="276.50" width="1.20" height="1.20" fill="#2a7fd0"/>
<path d="M627.90 276.10L637.00 276.10" stroke="#dcdcdc" stroke-width="0.30"/>
<rect x="638.20" y="275.45" width="6.00" height="1.30" fill="#2a7fd0" opacity="0.59"/>
<rect x="638.20" y="277.75" width="16.00" height="0.70" fill="#777" opacity="0.62"/>
<rect x="638.20" y="279.65" width="15.00" height="0.70" fill="#777" opacity="0.62"/>
<circle cx="626.20" cy="285.40" r="1.60" fill="#fff"/>
<rect x="625.60" y="284.80" width="1.20" height="1.20" fill="#2a7fd0"/>
<path d="M627.90 284.10L637.00 284.10" stroke="#dcdcdc" stroke-width="0.30"/>
<rect x="638.20" y="283.45" width="6.00" height="1.30" fill="#2a7fd0" opacity="0.59"/>
<rect x="638.20" y="285.75" width="16.00" height="0.70" fill="#777" opacity="0.62"/>
<rect x="638.20" y="287.65" width="15.00" height="0.70" fill="#777" opacity="0.62"/>
<circle cx="619.60" cy="293.10" r="1.60" fill="#fff"/>
<rect x="619.00" y="292.50" width="1.20" height="1.20" fill="#2a7fd0"/>
<path d="M621.30 293.10L637.00 292.10" stroke="#dcdcdc" stroke-width="0.30"/>
<rect x="638.20" y="291.45" width="6.00" height="1.30" fill="#2a7fd0" opacity="0.59"/>
<rect x="638.20" y="293.75" width="16.00" height="0.70" fill="#777" opacity="0.62"/>
<rect x="638.20" y="295.65" width="15.00" height="0.70" fill="#777" opacity="0.62"/>
<rect x="514.75" y="306.20" width="10.50" height="1.90" fill="#111" opacity="0.78"/>
<circle cx="511.00" cy="325.45" r="4.20" fill="#7a7a7a" filter="url(#bl2)" opacity="0.4"/>
<circle cx="511.00" cy="325.45" r="3.70" fill="#f8f8f8"/>
<rect x="509.60" y="324.50" width="2.80" height="0.70" fill="#777" opacity="0.62"/>
<rect x="509.60" y="326.00" width="2.80" height="0.70" fill="#777" opacity="0.62"/>
<path d="M511.00 325.45L511.00 314.55" stroke="#555" stroke-width="0.50" opacity="0.6"/>
<path d="M511.00 325.45L503.40 322.45" stroke="#555" stroke-width="0.50" opacity="0.6"/>
<path d="M511.00 325.45L518.80 322.45" stroke="#555" stroke-width="0.50" opacity="0.6"/>
<path d="M511.00 325.45L506.40 333.95" stroke="#555" stroke-width="0.50" opacity="0.6"/>
<path d="M511.00 325.45L515.80 333.95" stroke="#555" stroke-width="0.50" opacity="0.6"/>
<circle cx="510.70" cy="315.05" r="2.90" fill="#555" filter="url(#bl2)" opacity="0.5"/>
<circle cx="511.00" cy="314.55" r="2.70" fill="#0b6fc9"/>
<rect x="510.00" y="314.10" width="2.00" height="0.90" fill="#cfe3f7" opacity="0.62"/>
<rect x="503.00" y="314.15" width="4.60" height="0.80" fill="#666" opacity="0.56"/>
<circle cx="503.10" cy="322.95" r="2.90" fill="#555" filter="url(#bl2)" opacity="0.5"/>
<circle cx="503.40" cy="322.45" r="2.70" fill="#0b6fc9"/>
<rect x="502.40" y="322.00" width="2.00" height="0.90" fill="#cfe3f7" opacity="0.62"/>
<rect x="495.20" y="322.05" width="4.60" height="0.80" fill="#666" opacity="0.56"/>
<circle cx="518.50" cy="322.95" r="2.90" fill="#555" filter="url(#bl2)" opacity="0.5"/>
<circle cx="518.80" cy="322.45" r="2.70" fill="#0b6fc9"/>
<rect x="517.80" y="322.00" width="2.00" height="0.90" fill="#cfe3f7" opacity="0.62"/>
<rect x="522.40" y="322.05" width="4.60" height="0.80" fill="#666" opacity="0.56"/>
<circle cx="506.10" cy="334.45" r="2.90" fill="#555" filter="url(#bl2)" opacity="0.5"/>
<circle cx="506.40" cy="333.95" r="2.70" fill="#0b6fc9"/>
<rect x="505.40" y="333.50" width="2.00" height="0.90" fill="#cfe3f7" opacity="0.62"/>
<rect x="498.20" y="333.55" width="4.60" height="0.80" fill="#666" opacity="0.56"/>
<circle cx="515.50" cy="334.45" r="2.90" fill="#555" filter="url(#bl2)" opacity="0.5"/>
<circle cx="515.80" cy="333.95" r="2.70" fill="#0b6fc9"/>
<rect x="514.80" y="333.50" width="2.00" height="0.90" fill="#cfe3f7" opacity="0.62"/>
<rect x="519.40" y="333.55" width="4.60" height="0.80" fill="#666" opacity="0.56"/>
<circle cx="511.00" cy="325.45" r="3.70" fill="#f8f8f8"/>
<rect x="509.60" y="324.50" width="2.80" height="0.70" fill="#777" opacity="0.62"/>
<rect x="509.60" y="326.00" width="2.80" height="0.70" fill="#777" opacity="0.62"/>
<rect x="529.20" y="313.15" width="12.80" height="3.40" fill="#e4e4e4" stroke="#666" stroke-width="0.3"/>
<rect x="531.30" y="314.10" width="10.00" height="1.50" fill="#222" opacity="0.56"/>
<rect x="529.30" y="319.15" width="1.00" height="1.00" fill="#333" opacity="0.62"/>
<rect x="531.00" y="319.25" width="12.00" height="0.80" fill="#888" opacity="0.62"/>
<rect x="529.30" y="321.25" width="13.70" height="0.80" fill="#888" opacity="0.62"/>
<rect x="529.30" y="323.25" width="13.70" height="0.80" fill="#888" opacity="0.62"/>
<rect x="529.30" y="325.65" width="1.00" height="1.00" fill="#333" opacity="0.62"/>
<rect x="531.00" y="325.75" width="12.00" height="0.80" fill="#888" opacity="0.62"/>
<rect x="529.30" y="327.75" width="13.70" height="0.80" fill="#888" opacity="0.62"/>
<rect x="529.30" y="329.75" width="13.70" height="0.80" fill="#888" opacity="0.62"/>
<rect x="529.30" y="332.15" width="1.00" height="1.00" fill="#333" opacity="0.62"/>
<rect x="531.00" y="332.25" width="12.00" height="0.80" fill="#888" opacity="0.62"/>
<rect x="529.30" y="334.25" width="13.70" height="0.80" fill="#888" opacity="0.62"/>
<rect x="529.30" y="336.25" width="9.00" height="0.80" fill="#888" opacity="0.62"/>
<rect x="573.45" y="306.20" width="8.50" height="1.90" fill="#111" opacity="0.78"/>
<circle cx="576.80" cy="324.75" r="9.20" fill="none" stroke="#cfcfcf" stroke-width="0.4"/>
<rect x="575.50" y="322.30" width="2.60" height="0.70" fill="#888" opacity="0.62"/>
<rect x="575.00" y="324.20" width="3.60" height="0.90" fill="#777" opacity="0.62"/>
<rect x="575.00" y="326.20" width="3.60" height="0.70" fill="#999" opacity="0.62"/>
<circle cx="576.80" cy="315.05" r="3.00" fill="#666" filter="url(#bl2)" opacity="0.35"/>
<circle cx="576.80" cy="314.55" r="3.10" fill="#fff" opacity="0.95"/>
<circle cx="576.80" cy="314.55" r="2.20" fill="#0b6fc9"/>
<rect x="576.30" y="313.65" width="1.00" height="1.80" fill="#d6e8fa" opacity="0.62"/>
<circle cx="568.70" cy="325.25" r="3.00" fill="#666" filter="url(#bl2)" opacity="0.35"/>
<circle cx="568.70" cy="324.75" r="3.10" fill="#fff" opacity="0.95"/>
<circle cx="568.70" cy="324.75" r="2.20" fill="#0b6fc9"/>
<rect x="568.20" y="323.85" width="1.00" height="1.80" fill="#d6e8fa" opacity="0.62"/>
<circle cx="584.60" cy="325.25" r="3.00" fill="#666" filter="url(#bl2)" opacity="0.35"/>
<circle cx="584.60" cy="324.75" r="3.10" fill="#fff" opacity="0.95"/>
<circle cx="584.60" cy="324.75" r="2.20" fill="#0b6fc9"/>
<rect x="584.10" y="323.85" width="1.00" height="1.80" fill="#d6e8fa" opacity="0.62"/>
<circle cx="576.80" cy="334.95" r="3.00" fill="#666" filter="url(#bl2)" opacity="0.35"/>
<circle cx="576.80" cy="334.45" r="3.10" fill="#fff" opacity="0.95"/>
<circle cx="576.80" cy="334.45" r="2.20" fill="#0b6fc9"/>
<rect x="576.30" y="333.55" width="1.00" height="1.80" fill="#d6e8fa" opacity="0.62"/>
<rect x="563.70" y="311.45" width="5.50" height="1.40" fill="#2a7fd0" opacity="0.59"/>
<rect x="564.20" y="313.85" width="5.50" height="0.60" fill="#aaa" opacity="0.62"/>
<rect x="564.70" y="315.35" width="4.40" height="0.60" fill="#aaa" opacity="0.62"/>
<rect x="559.60" y="328.95" width="8.00" height="1.40" fill="#2a7fd0" opacity="0.59"/>
<rect x="560.10" y="331.35" width="8.00" height="0.60" fill="#aaa" opacity="0.62"/>
<rect x="560.60" y="332.85" width="6.40" height="0.60" fill="#aaa" opacity="0.62"/>
<rect x="586.60" y="315.95" width="9.20" height="1.40" fill="#2a7fd0" opacity="0.59"/>
<rect x="586.60" y="318.35" width="9.20" height="0.60" fill="#aaa" opacity="0.62"/>
<rect x="586.60" y="319.85" width="7.36" height="0.60" fill="#aaa" opacity="0.62"/>
<rect x="581.80" y="332.95" width="9.30" height="1.40" fill="#2a7fd0" opacity="0.59"/>
<rect x="581.80" y="335.35" width="9.30" height="0.60" fill="#aaa" opacity="0.62"/>
<rect x="581.80" y="336.85" width="7.44" height="0.60" fill="#aaa" opacity="0.62"/>
<rect x="630.85" y="306.80" width="8.50" height="1.90" fill="#111" opacity="0.78"/>
<rect x="610.20" y="313.75" width="12.00" height="10.70" fill="#8a8a8a" filter="url(#bl2)" opacity="0.45"/>
<rect x="610.50" y="313.85" width="11.30" height="10.10" fill="#e9e3e1"/>
<rect x="610.50" y="313.85" width="2.50" height="7.00" fill="#d9cfc6"/>
<rect x="614.80" y="315.35" width="3.00" height="6.00" fill="#e7c9c0"/>
<rect x="614.50" y="319.35" width="3.80" height="4.60" fill="#b8c3de"/>
<rect x="619.30" y="313.85" width="2.50" height="6.00" fill="#d8d2cc"/>
<rect x="635.90" y="313.75" width="12.00" height="10.70" fill="#8a8a8a" filter="url(#bl2)" opacity="0.45"/>
<rect x="636.20" y="313.85" width="11.30" height="10.10" fill="#6b5a3a"/>
<rect x="636.20" y="313.85" width="11.30" height="3.00" fill="#9aa6a0"/>
<rect x="637.20" y="316.85" width="3.50" height="5.50" fill="#c9a23c"/>
<rect x="641.20" y="315.85" width="3.00" height="4.00" fill="#3a3a3a"/>
<rect x="643.70" y="317.85" width="3.50" height="4.50" fill="#d3b04a"/>
<rect x="636.20" y="322.15" width="11.30" height="1.80" fill="#3d3a33"/>
<rect x="622.80" y="325.85" width="12.00" height="10.70" fill="#8a8a8a" filter="url(#bl2)" opacity="0.45"/>
<rect x="623.10" y="325.95" width="11.30" height="10.10" fill="#a8523a"/>
<rect x="623.10" y="325.95" width="11.30" height="3.30" fill="#d9d3cc"/>
<rect x="624.60" y="327.95" width="3.00" height="3.00" fill="#d7a04a"/>
<rect x="629.10" y="328.45" width="4.00" height="2.50" fill="#c66a3a"/>
<rect x="623.10" y="333.95" width="11.30" height="2.10" fill="#9c4a3a"/>
<rect x="648.90" y="325.85" width="12.00" height="10.70" fill="#8a8a8a" filter="url(#bl2)" opacity="0.45"/>
<rect x="649.20" y="325.95" width="11.30" height="10.10" fill="#5a7a3c"/>
<rect x="649.20" y="325.95" width="11.30" height="3.50" fill="#3f6a2c"/>
<rect x="649.20" y="330.95" width="11.30" height="3.50" fill="#b0605a"/>
<rect x="651.20" y="331.45" width="3.00" height="2.50" fill="#d9b0b8"/>
<rect x="656.20" y="331.45" width="3.00" height="2.50" fill="#7a86c0"/>
<rect x="649.20" y="334.45" width="11.30" height="1.60" fill="#8a8a84"/>
<rect x="624.10" y="313.15" width="10.40" height="2.30" fill="#0b6fc9"/>
<rect x="627.50" y="313.85" width="3.60" height="0.90" fill="#cfe3f7" opacity="0.62"/>
<rect x="624.10" y="317.65" width="10.00" height="0.60" fill="#999" opacity="0.62"/>
<rect x="624.10" y="319.45" width="10.00" height="0.60" fill="#999" opacity="0.62"/>
<rect x="624.10" y="321.15" width="3.00" height="0.60" fill="#999" opacity="0.62"/>
<rect x="649.20" y="313.15" width="10.40" height="2.30" fill="#0b6fc9"/>
<rect x="652.60" y="313.85" width="3.60" height="0.90" fill="#cfe3f7" opacity="0.62"/>
<rect x="649.20" y="317.65" width="10.00" height="0.60" fill="#999" opacity="0.62"/>
<rect x="649.20" y="319.45" width="10.00" height="0.60" fill="#999" opacity="0.62"/>
<rect x="649.20" y="321.15" width="3.00" height="0.60" fill="#999" opacity="0.62"/>
<rect x="611.00" y="326.15" width="10.40" height="2.30" fill="#0b6fc9"/>
<rect x="614.40" y="326.85" width="3.60" height="0.90" fill="#cfe3f7" opacity="0.62"/>
<rect x="611.00" y="330.65" width="10.00" height="0.60" fill="#999" opacity="0.62"/>
<rect x="611.00" y="332.45" width="10.00" height="0.60" fill="#999" opacity="0.62"/>
<rect x="611.00" y="334.15" width="3.00" height="0.60" fill="#999" opacity="0.62"/>
<rect x="636.20" y="326.15" width="10.40" height="2.30" fill="#0b6fc9"/>
<rect x="639.60" y="326.85" width="3.60" height="0.90" fill="#cfe3f7" opacity="0.62"/>
<rect x="636.20" y="330.65" width="10.00" height="0.60" fill="#999" opacity="0.62"/>
<rect x="636.20" y="332.45" width="10.00" height="0.60" fill="#999" opacity="0.62"/>
<rect x="636.20" y="334.15" width="3.00" height="0.60" fill="#999" opacity="0.62"/>
<rect x="516.00" y="348.65" width="8.00" height="1.90" fill="#111" opacity="0.78"/>
<path d="M496.40 358.20c0 4 1 6 3.300 7.500-.300 1.500-1 2.300-2 2.800h5.400c-1-.500-1.700-1.300-2-2.800 2.300-1.500 3.300-3.500 3.300-7.500z" fill="#f3f3f3" stroke="#8f8f8f" stroke-width="0.5" opacity="0.85"/>
<path d="M496.40 358.70q-2.500 .500-1.500 3.500M504.40 358.70q2.500 .500 1.500 3.500" fill="none" stroke="#9a9a9a" stroke-width="0.4"/>
<rect x="500.10" y="361.45" width="2.60" height="1.30" fill="#2a8ae0" opacity="0.62"/>
<rect x="499.10" y="371.40" width="4.20" height="1.60" fill="#2a7fd0" opacity="0.56"/>
<rect x="497.40" y="374.05" width="8.00" height="0.70" fill="#8a8a8a" opacity="0.62"/>
<rect x="497.40" y="375.45" width="7.00" height="0.70" fill="#8a8a8a" opacity="0.62"/>
<path d="M508.80 358.20c0 4 1 6 3.300 7.500-.300 1.500-1 2.300-2 2.800h5.400c-1-.500-1.700-1.300-2-2.800 2.300-1.500 3.300-3.500 3.300-7.500z" fill="#f3f3f3" stroke="#8f8f8f" stroke-width="0.5" opacity="0.85"/>
<path d="M508.80 358.70q-2.500 .500-1.500 3.500M516.80 358.70q2.500 .500 1.500 3.500" fill="none" stroke="#9a9a9a" stroke-width="0.4"/>
<rect x="512.50" y="361.45" width="2.60" height="1.30" fill="#2a8ae0" opacity="0.62"/>
<rect x="511.50" y="371.40" width="4.20" height="1.60" fill="#2a7fd0" opacity="0.56"/>
<rect x="509.80" y="374.05" width="8.00" height="0.70" fill="#8a8a8a" opacity="0.62"/>
<rect x="509.80" y="375.45" width="7.00" height="0.70" fill="#8a8a8a" opacity="0.62"/>
<path d="M521.30 358.20c0 4 1 6 3.300 7.500-.300 1.500-1 2.300-2 2.800h5.400c-1-.500-1.700-1.300-2-2.800 2.300-1.500 3.300-3.500 3.300-7.500z" fill="#f3f3f3" stroke="#8f8f8f" stroke-width="0.5" opacity="0.85"/>
<path d="M521.30 358.70q-2.500 .500-1.500 3.500M529.30 358.70q2.500 .500 1.500 3.500" fill="none" stroke="#9a9a9a" stroke-width="0.4"/>
<rect x="525.00" y="361.45" width="2.60" height="1.30" fill="#2a8ae0" opacity="0.62"/>
<rect x="524.00" y="371.40" width="4.20" height="1.60" fill="#2a7fd0" opacity="0.56"/>
<rect x="522.30" y="374.05" width="8.00" height="0.70" fill="#8a8a8a" opacity="0.62"/>
<rect x="522.30" y="375.45" width="7.00" height="0.70" fill="#8a8a8a" opacity="0.62"/>
<path d="M533.70 358.20c0 4 1 6 3.300 7.500-.300 1.500-1 2.300-2 2.800h5.400c-1-.500-1.700-1.300-2-2.800 2.300-1.500 3.300-3.500 3.300-7.500z" fill="#f3f3f3" stroke="#8f8f8f" stroke-width="0.5" opacity="0.85"/>
<path d="M533.70 358.70q-2.500 .500-1.500 3.500M541.70 358.70q2.500 .500 1.500 3.500" fill="none" stroke="#9a9a9a" stroke-width="0.4"/>
<rect x="537.40" y="361.45" width="2.60" height="1.30" fill="#2a8ae0" opacity="0.62"/>
<rect x="536.40" y="371.40" width="4.20" height="1.60" fill="#2a7fd0" opacity="0.56"/>
<rect x="534.70" y="374.05" width="8.00" height="0.70" fill="#8a8a8a" opacity="0.62"/>
<rect x="534.70" y="375.45" width="7.00" height="0.70" fill="#8a8a8a" opacity="0.62"/>
<rect x="573.70" y="348.65" width="8.00" height="1.90" fill="#111" opacity="0.78"/>
<polygon points="570.10,353.60 575.50,353.60 578.20,360.40 574.20,360.40" fill="#0b6fc9"/>
<polygon points="585.60,353.60 580.40,353.60 577.70,360.40 581.60,360.40" fill="#0b6fc9"/>
<polygon points="570.10,378.60 575.50,378.60 578.20,371.80 574.20,371.80" fill="#0b6fc9"/>
<polygon points="585.60,378.60 580.40,378.60 577.70,371.80 581.60,371.80" fill="#0b6fc9"/>
<rect x="574.00" y="365.05" width="7.70" height="2.30" fill="#2a8ae0" opacity="0.53"/>
<circle cx="556.60" cy="359.80" r="4.00" fill="#666" filter="url(#bl2)" opacity="0.5"/>
<circle cx="557.10" cy="359.10" r="3.80" fill="url(#gw)"/>
<rect x="555.90" y="358.00" width="2.40" height="2.20" fill="#2a7fd0" opacity="0.56"/>
<circle cx="556.60" cy="373.50" r="4.00" fill="#666" filter="url(#bl2)" opacity="0.5"/>
<circle cx="557.10" cy="372.80" r="3.80" fill="url(#gw)"/>
<rect x="555.90" y="371.70" width="2.40" height="2.20" fill="#2a7fd0" opacity="0.56"/>
<circle cx="597.00" cy="359.80" r="4.00" fill="#666" filter="url(#bl2)" opacity="0.5"/>
<circle cx="597.50" cy="359.10" r="3.80" fill="url(#gw)"/>
<rect x="596.30" y="358.00" width="2.40" height="2.20" fill="#2a7fd0" opacity="0.56"/>
<circle cx="597.00" cy="373.50" r="4.00" fill="#666" filter="url(#bl2)" opacity="0.5"/>
<circle cx="597.50" cy="372.80" r="3.80" fill="url(#gw)"/>
<rect x="596.30" y="371.70" width="2.40" height="2.20" fill="#2a7fd0" opacity="0.56"/>
<rect x="562.00" y="356.30" width="1.60" height="1.80" fill="#111" opacity="0.62"/>
<rect x="564.40" y="356.55" width="5.00" height="1.30" fill="#222" opacity="0.62"/>
<rect x="564.00" y="359.10" width="6.50" height="0.60" fill="#999" opacity="0.62"/>
<rect x="564.00" y="360.60" width="5.50" height="0.60" fill="#999" opacity="0.62"/>
<rect x="562.00" y="369.90" width="1.60" height="1.80" fill="#111" opacity="0.62"/>
<rect x="564.40" y="370.15" width="5.00" height="1.30" fill="#222" opacity="0.62"/>
<rect x="564.00" y="372.70" width="6.50" height="0.60" fill="#999" opacity="0.62"/>
<rect x="564.00" y="374.20" width="5.50" height="0.60" fill="#999" opacity="0.62"/>
<rect x="586.20" y="356.30" width="1.60" height="1.80" fill="#111" opacity="0.62"/>
<rect x="588.60" y="356.55" width="5.00" height="1.30" fill="#222" opacity="0.62"/>
<rect x="588.20" y="359.10" width="6.50" height="0.60" fill="#999" opacity="0.62"/>
<rect x="588.20" y="360.60" width="5.50" height="0.60" fill="#999" opacity="0.62"/>
<rect x="586.20" y="369.90" width="1.60" height="1.80" fill="#111" opacity="0.62"/>
<rect x="588.60" y="370.15" width="5.00" height="1.30" fill="#222" opacity="0.62"/>
<rect x="588.20" y="372.70" width="6.50" height="0.60" fill="#999" opacity="0.62"/>
<rect x="588.20" y="374.20" width="5.50" height="0.60" fill="#999" opacity="0.62"/>
<path d="M560.70 354.90L570.70 354.90" stroke="#7ab0e6" stroke-width="0.40"/>
<path d="M560.70 376.70L570.70 376.70" stroke="#7ab0e6" stroke-width="0.40"/>
<path d="M584.70 354.90L594.70 354.90" stroke="#7ab0e6" stroke-width="0.40"/>
<path d="M584.70 376.70L594.70 376.70" stroke="#7ab0e6" stroke-width="0.40"/>
<rect x="631.10" y="348.65" width="8.00" height="1.90" fill="#111" opacity="0.78"/>
<rect x="630.80" y="365.70" width="8.60" height="2.20" fill="#2a8ae0" opacity="0.56"/>
<polygon points="616.40,357.70 619.90,359.80 619.90,364.40 616.40,366.50 612.90,364.40 612.90,359.80" fill="#f7f7f7" stroke="#0b6fc9" stroke-width="0.6"/>
<rect x="615.00" y="360.90" width="2.80" height="2.40" fill="#2a7fd0" opacity="0.56"/>
<polygon points="616.40,367.10 619.90,369.20 619.90,373.80 616.40,375.90 612.90,373.80 612.90,369.20" fill="#f7f7f7" stroke="#0b6fc9" stroke-width="0.6"/>
<rect x="615.00" y="370.30" width="2.80" height="2.40" fill="#2a7fd0" opacity="0.56"/>
<polygon points="653.50,357.70 657.00,359.80 657.00,364.40 653.50,366.50 650.00,364.40 650.00,359.80" fill="#f7f7f7" stroke="#0b6fc9" stroke-width="0.6"/>
<rect x="652.10" y="360.90" width="2.80" height="2.40" fill="#2a7fd0" opacity="0.56"/>
<polygon points="653.50,367.10 657.00,369.20 657.00,373.80 653.50,375.90 650.00,373.80 650.00,369.20" fill="#f7f7f7" stroke="#0b6fc9" stroke-width="0.6"/>
<rect x="652.10" y="370.30" width="2.80" height="2.40" fill="#2a7fd0" opacity="0.56"/>
<rect x="620.20" y="354.50" width="13.70" height="5.70" fill="none" stroke="#c9c9c9" stroke-width="0.3"/>
<rect x="620.70" y="352.70" width="6.50" height="1.00" fill="#444" opacity="0.62"/>
<rect x="621.20" y="355.80" width="12.00" height="0.60" fill="#999" opacity="0.62"/>
<rect x="621.20" y="357.50" width="11.00" height="0.60" fill="#999" opacity="0.62"/>
<rect x="620.20" y="372.80" width="13.70" height="5.70" fill="none" stroke="#c9c9c9" stroke-width="0.3"/>
<rect x="620.70" y="379.60" width="6.50" height="1.00" fill="#444" opacity="0.62"/>
<rect x="621.20" y="373.80" width="12.00" height="0.60" fill="#999" opacity="0.62"/>
<rect x="621.20" y="375.50" width="11.00" height="0.60" fill="#999" opacity="0.62"/>
<rect x="636.50" y="354.50" width="13.70" height="5.70" fill="none" stroke="#c9c9c9" stroke-width="0.3"/>
<rect x="643.00" y="352.70" width="6.50" height="1.00" fill="#444" opacity="0.62"/>
<rect x="637.50" y="355.80" width="12.00" height="0.60" fill="#999" opacity="0.62"/>
<rect x="637.50" y="357.50" width="11.00" height="0.60" fill="#999" opacity="0.62"/>
<rect x="636.50" y="372.80" width="13.70" height="5.70" fill="none" stroke="#c9c9c9" stroke-width="0.3"/>
<rect x="643.00" y="379.60" width="6.50" height="1.00" fill="#444" opacity="0.62"/>
<rect x="637.50" y="373.80" width="12.00" height="0.60" fill="#999" opacity="0.62"/>
<rect x="637.50" y="375.50" width="11.00" height="0.60" fill="#999" opacity="0.62"/>
<circle cx="500.40" cy="404.85" r="5.80" fill="#3a3a3a" filter="url(#bl2)" opacity="0.75"/>
<circle cx="501.70" cy="404.15" r="5.50" fill="url(#gw)"/>
<rect x="499.50" y="403.40" width="4.80" height="1.10" fill="#222" opacity="0.56"/>
<circle cx="499.00" cy="398.55" r="2.60" fill="#555" filter="url(#bl2)" opacity="0.4"/>
<circle cx="499.00" cy="398.15" r="2.30" fill="#0b6fc9"/>
<rect x="498.20" y="397.40" width="1.60" height="1.50" fill="#d6e8fa" opacity="0.62"/>
<rect x="497.50" y="412.25" width="8.40" height="0.60" fill="#999" opacity="0.62"/>
<rect x="497.50" y="413.85" width="8.40" height="0.60" fill="#999" opacity="0.62"/>
<rect x="497.50" y="415.45" width="7.50" height="0.60" fill="#999" opacity="0.62"/>
<circle cx="512.50" cy="404.85" r="5.80" fill="#3a3a3a" filter="url(#bl2)" opacity="0.75"/>
<circle cx="513.80" cy="404.15" r="5.50" fill="url(#gw)"/>
<rect x="511.60" y="403.40" width="4.80" height="1.10" fill="#222" opacity="0.56"/>
<circle cx="511.10" cy="398.55" r="2.60" fill="#555" filter="url(#bl2)" opacity="0.4"/>
<circle cx="511.10" cy="398.15" r="2.30" fill="#0b6fc9"/>
<rect x="510.30" y="397.40" width="1.60" height="1.50" fill="#d6e8fa" opacity="0.62"/>
<rect x="509.60" y="412.25" width="8.40" height="0.60" fill="#999" opacity="0.62"/>
<rect x="509.60" y="413.85" width="8.40" height="0.60" fill="#999" opacity="0.62"/>
<rect x="509.60" y="415.45" width="7.50" height="0.60" fill="#999" opacity="0.62"/>
<circle cx="524.40" cy="404.85" r="5.80" fill="#3a3a3a" filter="url(#bl2)" opacity="0.75"/>
<circle cx="525.70" cy="404.15" r="5.50" fill="url(#gw)"/>
<rect x="523.50" y="403.40" width="4.80" height="1.10" fill="#222" opacity="0.56"/>
<circle cx="523.00" cy="398.55" r="2.60" fill="#555" filter="url(#bl2)" opacity="0.4"/>
<circle cx="523.00" cy="398.15" r="2.30" fill="#0b6fc9"/>
<rect x="522.20" y="397.40" width="1.60" height="1.50" fill="#d6e8fa" opacity="0.62"/>
<rect x="521.50" y="412.25" width="8.40" height="0.60" fill="#999" opacity="0.62"/>
<rect x="521.50" y="413.85" width="8.40" height="0.60" fill="#999" opacity="0.62"/>
<rect x="521.50" y="415.45" width="7.50" height="0.60" fill="#999" opacity="0.62"/>
<circle cx="536.40" cy="404.85" r="5.80" fill="#3a3a3a" filter="url(#bl2)" opacity="0.75"/>
<circle cx="537.70" cy="404.15" r="5.50" fill="url(#gw)"/>
<rect x="535.50" y="403.40" width="4.80" height="1.10" fill="#222" opacity="0.56"/>
<circle cx="535.00" cy="398.55" r="2.60" fill="#555" filter="url(#bl2)" opacity="0.4"/>
<circle cx="535.00" cy="398.15" r="2.30" fill="#0b6fc9"/>
<rect x="534.20" y="397.40" width="1.60" height="1.50" fill="#d6e8fa" opacity="0.62"/>
<rect x="533.50" y="412.25" width="8.40" height="0.60" fill="#999" opacity="0.62"/>
<rect x="533.50" y="413.85" width="8.40" height="0.60" fill="#999" opacity="0.62"/>
<rect x="533.50" y="415.45" width="7.50" height="0.60" fill="#999" opacity="0.62"/>
<rect x="495.00" y="403.55" width="2.20" height="0.90" fill="#0b6fc9"/>
<rect x="507.30" y="403.55" width="2.20" height="0.90" fill="#0b6fc9"/>
<rect x="519.30" y="403.55" width="2.20" height="0.90" fill="#0b6fc9"/>
<rect x="531.20" y="403.55" width="2.20" height="0.90" fill="#0b6fc9"/>
<rect x="543.00" y="403.55" width="2.20" height="0.90" fill="#0b6fc9"/>
<rect x="573.70" y="390.70" width="8.00" height="1.90" fill="#111" opacity="0.78"/>
<circle cx="560.30" cy="409.45" r="6.60" fill="#666" filter="url(#bl2)" opacity="0.35"/>
<circle cx="560.60" cy="408.85" r="6.20" fill="#f6f6f6"/>
<circle cx="560.60" cy="408.85" r="4.10" fill="#0b6fc9"/>
<rect x="558.90" y="406.80" width="3.40" height="1.50" fill="#d6e8fa" opacity="0.62"/>
<rect x="558.90" y="409.50" width="3.40" height="1.50" fill="#d6e8fa" opacity="0.62"/>
<path d="M567.70 409.25L601.70 409.25" stroke="#bdbdbd" stroke-width="0.40"/>
<path d="M572.30 409.05c-1.800-3-3.600-4.500-3.600-7a3.600 3.600 0 0 1 7.200 0c0 2.500-1.800 4-3.600 7z" fill="#777" filter="url(#bl2)" opacity="0.4"/>
<path d="M572.80 408.75c-1.800-3-3.600-4.500-3.600-7a3.600 3.600 0 0 1 7.200 0c0 2.500-1.800 4-3.600 7z" fill="#f7f7f7"/>
<rect x="572.40" y="399.95" width="0.80" height="2.60" fill="#2a7fd0" opacity="0.62"/>
<circle cx="572.80" cy="409.25" r="1.50" fill="#0b6fc9"/>
<rect x="570.30" y="412.20" width="5.00" height="1.10" fill="#222" opacity="0.62"/>
<rect x="569.80" y="414.45" width="6.00" height="0.60" fill="#8a8a8a" opacity="0.62"/>
<rect x="569.80" y="416.05" width="6.00" height="0.60" fill="#8a8a8a" opacity="0.62"/>
<rect x="569.80" y="417.65" width="6.00" height="0.60" fill="#8a8a8a" opacity="0.62"/>
<rect x="569.80" y="419.25" width="3.00" height="0.60" fill="#8a8a8a" opacity="0.62"/>
<path d="M580.90 409.05c-1.800-3-3.600-4.500-3.600-7a3.600 3.600 0 0 1 7.200 0c0 2.500-1.800 4-3.600 7z" fill="#777" filter="url(#bl2)" opacity="0.4"/>
<path d="M581.40 408.75c-1.800-3-3.600-4.500-3.600-7a3.600 3.600 0 0 1 7.200 0c0 2.500-1.800 4-3.600 7z" fill="#f7f7f7"/>
<rect x="581.00" y="399.95" width="0.80" height="2.60" fill="#2a7fd0" opacity="0.62"/>
<circle cx="581.40" cy="409.25" r="1.50" fill="#0b6fc9"/>
<rect x="578.90" y="412.20" width="5.00" height="1.10" fill="#222" opacity="0.62"/>
<rect x="578.40" y="414.45" width="6.00" height="0.60" fill="#8a8a8a" opacity="0.62"/>
<rect x="578.40" y="416.05" width="6.00" height="0.60" fill="#8a8a8a" opacity="0.62"/>
<rect x="578.40" y="417.65" width="6.00" height="0.60" fill="#8a8a8a" opacity="0.62"/>
<rect x="578.40" y="419.25" width="3.00" height="0.60" fill="#8a8a8a" opacity="0.62"/>
<path d="M589.20 409.05c-1.800-3-3.600-4.500-3.600-7a3.600 3.600 0 0 1 7.200 0c0 2.500-1.800 4-3.600 7z" fill="#777" filter="url(#bl2)" opacity="0.4"/>
<path d="M589.70 408.75c-1.800-3-3.600-4.500-3.600-7a3.600 3.600 0 0 1 7.200 0c0 2.500-1.800 4-3.600 7z" fill="#f7f7f7"/>
<rect x="589.30" y="399.95" width="0.80" height="2.60" fill="#2a7fd0" opacity="0.62"/>
<circle cx="589.70" cy="409.25" r="1.50" fill="#0b6fc9"/>
<rect x="587.20" y="412.20" width="5.00" height="1.10" fill="#222" opacity="0.62"/>
<rect x="586.70" y="414.45" width="6.00" height="0.60" fill="#8a8a8a" opacity="0.62"/>
<rect x="586.70" y="416.05" width="6.00" height="0.60" fill="#8a8a8a" opacity="0.62"/>
<rect x="586.70" y="417.65" width="6.00" height="0.60" fill="#8a8a8a" opacity="0.62"/>
<rect x="586.70" y="419.25" width="3.00" height="0.60" fill="#8a8a8a" opacity="0.62"/>
<path d="M597.30 409.05c-1.800-3-3.600-4.500-3.600-7a3.600 3.600 0 0 1 7.200 0c0 2.500-1.800 4-3.600 7z" fill="#777" filter="url(#bl2)" opacity="0.4"/>
<path d="M597.80 408.75c-1.800-3-3.600-4.500-3.600-7a3.600 3.600 0 0 1 7.200 0c0 2.500-1.800 4-3.600 7z" fill="#f7f7f7"/>
<rect x="597.40" y="399.95" width="0.80" height="2.60" fill="#2a7fd0" opacity="0.62"/>
<circle cx="597.80" cy="409.25" r="1.50" fill="#0b6fc9"/>
<rect x="595.30" y="412.20" width="5.00" height="1.10" fill="#222" opacity="0.62"/>
<rect x="594.80" y="414.45" width="6.00" height="0.60" fill="#8a8a8a" opacity="0.62"/>
<rect x="594.80" y="416.05" width="6.00" height="0.60" fill="#8a8a8a" opacity="0.62"/>
<rect x="594.80" y="417.65" width="6.00" height="0.60" fill="#8a8a8a" opacity="0.62"/>
<rect x="594.80" y="419.25" width="3.00" height="0.60" fill="#8a8a8a" opacity="0.62"/>
<rect x="630.00" y="390.70" width="12.00" height="1.90" fill="#111" opacity="0.78"/>
<ellipse cx="619.90" cy="409.05" rx="4.50" ry="5.30" fill="#fafafa" stroke="#dedede" stroke-width="0.3"/>
<ellipse cx="619.90" cy="408.85" rx="3.00" ry="3.50" fill="#0b6fc9"/>
<rect x="618.90" y="407.65" width="2.00" height="2.40" fill="#d6e8fa" opacity="0.62"/>
<rect x="617.90" y="396.75" width="3.00" height="0.60" fill="#aaa" opacity="0.62"/>
<rect x="615.90" y="398.45" width="8.50" height="0.60" fill="#aaa" opacity="0.62"/>
<rect x="615.90" y="400.05" width="8.50" height="0.60" fill="#aaa" opacity="0.62"/>
<rect x="615.90" y="401.65" width="3.00" height="0.60" fill="#aaa" opacity="0.62"/>
<ellipse cx="630.50" cy="409.05" rx="4.50" ry="5.30" fill="#fafafa" stroke="#dedede" stroke-width="0.3"/>
<ellipse cx="630.50" cy="408.85" rx="3.00" ry="3.50" fill="#0b6fc9"/>
<rect x="629.50" y="407.65" width="2.00" height="2.40" fill="#d6e8fa" opacity="0.62"/>
<rect x="629.50" y="415.75" width="3.00" height="0.60" fill="#aaa" opacity="0.62"/>
<rect x="626.50" y="417.45" width="8.50" height="0.60" fill="#aaa" opacity="0.62"/>
<rect x="626.50" y="419.05" width="8.50" height="0.60" fill="#aaa" opacity="0.62"/>
<rect x="626.50" y="420.65" width="3.00" height="0.60" fill="#aaa" opacity="0.62"/>
<ellipse cx="641.10" cy="409.05" rx="4.50" ry="5.30" fill="#fafafa" stroke="#dedede" stroke-width="0.3"/>
<ellipse cx="641.10" cy="408.85" rx="3.00" ry="3.50" fill="#0b6fc9"/>
<rect x="640.10" y="407.65" width="2.00" height="2.40" fill="#d6e8fa" opacity="0.62"/>
<rect x="639.10" y="396.75" width="3.00" height="0.60" fill="#aaa" opacity="0.62"/>
<rect x="637.10" y="398.45" width="8.50" height="0.60" fill="#aaa" opacity="0.62"/>
<rect x="637.10" y="400.05" width="8.50" height="0.60" fill="#aaa" opacity="0.62"/>
<rect x="637.10" y="401.65" width="3.00" height="0.60" fill="#aaa" opacity="0.62"/>
<ellipse cx="651.70" cy="409.05" rx="4.50" ry="5.30" fill="#fafafa" stroke="#dedede" stroke-width="0.3"/>
<ellipse cx="651.70" cy="408.85" rx="3.00" ry="3.50" fill="#0b6fc9"/>
<rect x="650.70" y="407.65" width="2.00" height="2.40" fill="#d6e8fa" opacity="0.62"/>
<rect x="650.70" y="415.75" width="3.00" height="0.60" fill="#aaa" opacity="0.62"/>
<rect x="647.70" y="417.45" width="8.50" height="0.60" fill="#aaa" opacity="0.62"/>
<rect x="647.70" y="419.05" width="8.50" height="0.60" fill="#aaa" opacity="0.62"/>
<rect x="647.70" y="420.65" width="3.00" height="0.60" fill="#aaa" opacity="0.62"/>
<rect x="514.80" y="432.85" width="12.00" height="1.90" fill="#111" opacity="0.78"/>
<rect x="499.70" y="437.60" width="10.00" height="26.00" fill="#777" rx="1.50" filter="url(#bl2)" opacity="0.35"/>
<rect x="500.00" y="437.30" width="9.50" height="25.50" fill="#fbfbfb" rx="1.60"/>
<circle cx="504.70" cy="442.70" r="3.30" fill="#fff" stroke="#0b6fc9" stroke-width="0.8"/>
<rect x="503.60" y="442.00" width="2.20" height="1.80" fill="#4a98e2" opacity="0.56"/>
<rect x="503.30" y="449.25" width="2.90" height="1.10" fill="#2a7fd0" opacity="0.62"/>
<rect x="501.70" y="451.80" width="6.20" height="0.60" fill="#aaa" opacity="0.62"/>
<rect x="501.70" y="453.50" width="6.20" height="0.60" fill="#aaa" opacity="0.62"/>
<rect x="501.70" y="455.20" width="6.20" height="0.60" fill="#aaa" opacity="0.62"/>
<rect x="501.70" y="456.90" width="6.20" height="0.60" fill="#aaa" opacity="0.62"/>
<rect x="501.70" y="458.60" width="2.50" height="0.60" fill="#aaa" opacity="0.62"/>
<rect x="503.70" y="460.50" width="2.00" height="0.60" fill="#bbb" opacity="0.62"/>
<rect x="510.30" y="437.60" width="10.00" height="26.00" fill="#777" rx="1.50" filter="url(#bl2)" opacity="0.35"/>
<rect x="510.60" y="437.30" width="9.50" height="25.50" fill="#fbfbfb" rx="1.60"/>
<circle cx="515.30" cy="442.70" r="3.30" fill="#fff" stroke="#0b6fc9" stroke-width="0.8"/>
<rect x="514.20" y="442.00" width="2.20" height="1.80" fill="#4a98e2" opacity="0.56"/>
<rect x="513.90" y="449.25" width="2.90" height="1.10" fill="#2a7fd0" opacity="0.62"/>
<rect x="512.30" y="451.80" width="6.20" height="0.60" fill="#aaa" opacity="0.62"/>
<rect x="512.30" y="453.50" width="6.20" height="0.60" fill="#aaa" opacity="0.62"/>
<rect x="512.30" y="455.20" width="6.20" height="0.60" fill="#aaa" opacity="0.62"/>
<rect x="512.30" y="456.90" width="6.20" height="0.60" fill="#aaa" opacity="0.62"/>
<rect x="512.30" y="458.60" width="2.50" height="0.60" fill="#aaa" opacity="0.62"/>
<rect x="514.30" y="460.50" width="2.00" height="0.60" fill="#bbb" opacity="0.62"/>
<rect x="520.90" y="437.60" width="10.00" height="26.00" fill="#777" rx="1.50" filter="url(#bl2)" opacity="0.35"/>
<rect x="521.20" y="437.30" width="9.50" height="25.50" fill="#fbfbfb" rx="1.60"/>
<circle cx="525.90" cy="442.70" r="3.30" fill="#fff" stroke="#0b6fc9" stroke-width="0.8"/>
<rect x="524.80" y="442.00" width="2.20" height="1.80" fill="#4a98e2" opacity="0.56"/>
<rect x="524.50" y="449.25" width="2.90" height="1.10" fill="#2a7fd0" opacity="0.62"/>
<rect x="522.90" y="451.80" width="6.20" height="0.60" fill="#aaa" opacity="0.62"/>
<rect x="522.90" y="453.50" width="6.20" height="0.60" fill="#aaa" opacity="0.62"/>
<rect x="522.90" y="455.20" width="6.20" height="0.60" fill="#aaa" opacity="0.62"/>
<rect x="522.90" y="456.90" width="6.20" height="0.60" fill="#aaa" opacity="0.62"/>
<rect x="522.90" y="458.60" width="2.50" height="0.60" fill="#aaa" opacity="0.62"/>
<rect x="524.90" y="460.50" width="2.00" height="0.60" fill="#bbb" opacity="0.62"/>
<rect x="531.50" y="437.60" width="10.00" height="26.00" fill="#777" rx="1.50" filter="url(#bl2)" opacity="0.35"/>
<rect x="531.80" y="437.30" width="9.50" height="25.50" fill="#fbfbfb" rx="1.60"/>
<circle cx="536.50" cy="442.70" r="3.30" fill="#fff" stroke="#0b6fc9" stroke-width="0.8"/>
<rect x="535.40" y="442.00" width="2.20" height="1.80" fill="#4a98e2" opacity="0.56"/>
<rect x="535.10" y="449.25" width="2.90" height="1.10" fill="#2a7fd0" opacity="0.62"/>
<rect x="533.50" y="451.80" width="6.20" height="0.60" fill="#aaa" opacity="0.62"/>
<rect x="533.50" y="453.50" width="6.20" height="0.60" fill="#aaa" opacity="0.62"/>
<rect x="533.50" y="455.20" width="6.20" height="0.60" fill="#aaa" opacity="0.62"/>
<rect x="533.50" y="456.90" width="6.20" height="0.60" fill="#aaa" opacity="0.62"/>
<rect x="533.50" y="458.60" width="2.50" height="0.60" fill="#aaa" opacity="0.62"/>
<rect x="535.50" y="460.50" width="2.00" height="0.60" fill="#bbb" opacity="0.62"/>
<rect x="575.20" y="432.85" width="9.00" height="1.90" fill="#111" opacity="0.78"/>
<ellipse cx="562.20" cy="451.30" rx="6.90" ry="8.30" fill="#555" filter="url(#bl2)" opacity="0.4"/>
<ellipse cx="562.60" cy="450.90" rx="6.50" ry="8.00" fill="#f3f3f3" stroke="#9a9a9a" stroke-width="0.4"/>
<ellipse cx="562.60" cy="450.90" rx="5.30" ry="6.70" fill="#9db8d3"/>
<path d="M561.70 455.30l1.500-9 1.500 9z" fill="#e9eef4"/>
<rect x="558.20" y="453.80" width="9.00" height="2.50" fill="#c9a59a" opacity="0.7"/>
<ellipse cx="562.60" cy="450.90" rx="5.30" ry="6.70" fill="none" stroke="#e8e8e8" stroke-width="0.5"/>
<path d="M567.70 446.30L572.00 441.20" stroke="#bbb" stroke-width="0.40"/>
<circle cx="571.70" cy="441.70" r="2.90" fill="#555" filter="url(#bl2)" opacity="0.4"/>
<circle cx="572.00" cy="441.20" r="2.60" fill="#0b6fc9"/>
<rect x="571.30" y="440.30" width="1.40" height="1.80" fill="#d6e8fa" opacity="0.62"/>
<path d="M567.70 450.90L575.00 450.90" stroke="#bbb" stroke-width="0.40"/>
<circle cx="574.70" cy="451.40" r="2.90" fill="#555" filter="url(#bl2)" opacity="0.4"/>
<circle cx="575.00" cy="450.90" r="2.60" fill="#0b6fc9"/>
<rect x="574.30" y="450.00" width="1.40" height="1.80" fill="#d6e8fa" opacity="0.62"/>
<path d="M567.70 455.80L572.00 461.30" stroke="#bbb" stroke-width="0.40"/>
<circle cx="571.70" cy="461.80" r="2.90" fill="#555" filter="url(#bl2)" opacity="0.4"/>
<circle cx="572.00" cy="461.30" r="2.60" fill="#0b6fc9"/>
<rect x="571.30" y="460.40" width="1.40" height="1.80" fill="#d6e8fa" opacity="0.62"/>
<rect x="577.50" y="438.95" width="8.00" height="1.50" fill="#2a7fd0" opacity="0.59"/>
<rect x="577.00" y="441.70" width="19.00" height="0.60" fill="#8a8a8a" opacity="0.62"/>
<rect x="577.00" y="443.60" width="19.00" height="0.60" fill="#8a8a8a" opacity="0.62"/>
<rect x="578.90" y="448.55" width="8.00" height="1.50" fill="#2a7fd0" opacity="0.59"/>
<rect x="578.40" y="451.30" width="19.00" height="0.60" fill="#8a8a8a" opacity="0.62"/>
<rect x="578.40" y="453.20" width="19.00" height="0.60" fill="#8a8a8a" opacity="0.62"/>
<rect x="577.50" y="458.25" width="8.00" height="1.50" fill="#2a7fd0" opacity="0.59"/>
<rect x="577.00" y="461.00" width="19.00" height="0.60" fill="#8a8a8a" opacity="0.62"/>
<rect x="577.00" y="462.90" width="19.00" height="0.60" fill="#8a8a8a" opacity="0.62"/>
<rect x="630.85" y="432.85" width="8.50" height="1.90" fill="#111" opacity="0.78"/>
<rect x="611.80" y="441.50" width="17.50" height="6.30" fill="#777" filter="url(#bl2)" opacity="0.3"/>
<path d="M617.20 440.60h12.300v7.400h-12.300" fill="none" stroke="#0b6fc9" stroke-width="0.7"/>
<rect x="612.20" y="441.30" width="16.60" height="6.00" fill="#fdfdfd"/>
<rect x="628.80" y="440.25" width="1.30" height="8.10" fill="#0b6fc9"/>
<rect x="614.30" y="442.80" width="12.50" height="0.60" fill="#8a8a8a" opacity="0.62"/>
<rect x="614.30" y="444.60" width="12.50" height="0.60" fill="#8a8a8a" opacity="0.62"/>
<rect x="614.30" y="446.20" width="1.00" height="0.60" fill="#8a8a8a" opacity="0.62"/>
<rect x="640.00" y="441.50" width="17.50" height="6.30" fill="#777" filter="url(#bl2)" opacity="0.3"/>
<path d="M651.80 440.60h-12.300v7.400h12.300" fill="none" stroke="#0b6fc9" stroke-width="0.7"/>
<rect x="640.00" y="441.30" width="16.60" height="6.00" fill="#fdfdfd"/>
<rect x="638.70" y="440.25" width="1.30" height="8.10" fill="#0b6fc9"/>
<rect x="642.50" y="442.80" width="12.50" height="0.60" fill="#8a8a8a" opacity="0.62"/>
<rect x="642.50" y="444.60" width="12.50" height="0.60" fill="#8a8a8a" opacity="0.62"/>
<rect x="642.50" y="446.20" width="1.00" height="0.60" fill="#8a8a8a" opacity="0.62"/>
<rect x="633.10" y="442.00" width="3.20" height="1.60" fill="#333" opacity="0.56"/>
<rect x="633.10" y="445.00" width="3.20" height="1.60" fill="#333" opacity="0.56"/>
<rect x="611.80" y="452.50" width="17.50" height="6.30" fill="#777" filter="url(#bl2)" opacity="0.3"/>
<path d="M617.20 451.60h12.300v7.400h-12.300" fill="none" stroke="#0b6fc9" stroke-width="0.7"/>
<rect x="612.20" y="452.30" width="16.60" height="6.00" fill="#fdfdfd"/>
<rect x="628.80" y="451.25" width="1.30" height="8.10" fill="#0b6fc9"/>
<rect x="614.30" y="453.80" width="12.50" height="0.60" fill="#8a8a8a" opacity="0.62"/>
<rect x="614.30" y="455.60" width="12.50" height="0.60" fill="#8a8a8a" opacity="0.62"/>
<rect x="614.30" y="457.20" width="1.00" height="0.60" fill="#8a8a8a" opacity="0.62"/>
<rect x="640.00" y="452.50" width="17.50" height="6.30" fill="#777" filter="url(#bl2)" opacity="0.3"/>
<path d="M651.80 451.60h-12.300v7.400h12.300" fill="none" stroke="#0b6fc9" stroke-width="0.7"/>
<rect x="640.00" y="452.30" width="16.60" height="6.00" fill="#fdfdfd"/>
<rect x="638.70" y="451.25" width="1.30" height="8.10" fill="#0b6fc9"/>
<rect x="642.50" y="453.80" width="12.50" height="0.60" fill="#8a8a8a" opacity="0.62"/>
<rect x="642.50" y="455.60" width="12.50" height="0.60" fill="#8a8a8a" opacity="0.62"/>
<rect x="642.50" y="457.20" width="1.00" height="0.60" fill="#8a8a8a" opacity="0.62"/>
<rect x="633.10" y="453.00" width="3.20" height="1.60" fill="#333" opacity="0.56"/>
<rect x="633.10" y="456.00" width="3.20" height="1.60" fill="#333" opacity="0.56"/>
<rect x="516.00" y="473.90" width="8.00" height="1.90" fill="#111" opacity="0.78"/>
<path d="M511.70 488.55L518.70 480.55" stroke="#444" stroke-width="2.80" stroke-linecap="round" filter="url(#bl2)" opacity="0.55"/>
<path d="M512.30 487.75L519.30 479.75" stroke="#fbfbfb" stroke-width="2.40" stroke-linecap="round"/>
<circle cx="519.10" cy="479.95" r="0.50" fill="#bbb"/>
<path d="M510.80 499.95L517.70 491.45" stroke="#444" stroke-width="2.80" stroke-linecap="round" filter="url(#bl2)" opacity="0.55"/>
<path d="M511.40 499.15L518.30 490.65" stroke="#fbfbfb" stroke-width="2.40" stroke-linecap="round"/>
<circle cx="518.10" cy="490.85" r="0.50" fill="#bbb"/>
<path d="M519.20 497.95L526.10 489.55" stroke="#444" stroke-width="2.80" stroke-linecap="round" filter="url(#bl2)" opacity="0.55"/>
<path d="M519.80 497.15L526.70 488.75" stroke="#fbfbfb" stroke-width="2.40" stroke-linecap="round"/>
<circle cx="526.50" cy="488.95" r="0.50" fill="#bbb"/>
<path d="M518.20 508.85L525.60 499.95" stroke="#444" stroke-width="2.80" stroke-linecap="round" filter="url(#bl2)" opacity="0.55"/>
<path d="M518.80 508.05L526.20 499.15" stroke="#fbfbfb" stroke-width="2.40" stroke-linecap="round"/>
<circle cx="526.00" cy="499.35" r="0.50" fill="#bbb"/>
<circle cx="514.10" cy="486.75" r="2.00" fill="#0b6fc9"/>
<rect x="513.60" y="486.00" width="1.00" height="1.50" fill="#d6e8fa" opacity="0.62"/>
<circle cx="517.30" cy="491.15" r="2.00" fill="#0b6fc9"/>
<rect x="516.80" y="490.40" width="1.00" height="1.50" fill="#d6e8fa" opacity="0.62"/>
<circle cx="521.30" cy="495.65" r="2.00" fill="#0b6fc9"/>
<rect x="520.80" y="494.90" width="1.00" height="1.50" fill="#d6e8fa" opacity="0.62"/>
<circle cx="524.80" cy="499.95" r="2.00" fill="#0b6fc9"/>
<rect x="524.30" y="499.20" width="1.00" height="1.50" fill="#d6e8fa" opacity="0.62"/>
<rect x="523.30" y="479.75" width="12.00" height="0.80" fill="#b0b0b0" opacity="0.62"/>
<rect x="523.30" y="481.95" width="12.00" height="0.80" fill="#b0b0b0" opacity="0.62"/>
<rect x="530.00" y="488.45" width="12.00" height="0.80" fill="#b0b0b0" opacity="0.62"/>
<rect x="530.00" y="490.65" width="12.00" height="0.80" fill="#b0b0b0" opacity="0.62"/>
<rect x="497.00" y="494.45" width="12.00" height="0.80" fill="#b0b0b0" opacity="0.62"/>
<rect x="497.00" y="496.65" width="12.00" height="0.80" fill="#b0b0b0" opacity="0.62"/>
<rect x="504.00" y="502.45" width="12.00" height="0.80" fill="#b0b0b0" opacity="0.62"/>
<rect x="504.00" y="504.65" width="12.00" height="0.80" fill="#b0b0b0" opacity="0.62"/>
<rect x="577.20" y="473.90" width="7.00" height="1.90" fill="#111" opacity="0.78"/>
<circle cx="566.00" cy="492.55" r="5.40" fill="#666" filter="url(#bl2)" opacity="0.3"/>
<circle cx="566.10" cy="492.15" r="5.20" fill="#f7f7f7" stroke="#dcdcdc" stroke-width="0.5" stroke-dasharray="1.300 1"/>
<circle cx="566.10" cy="492.15" r="3.90" fill="#fbfbfb"/>
<rect x="564.90" y="490.15" width="2.50" height="4.20" fill="#3a3a3a" opacity="0.85"/>
<rect x="565.90" y="490.15" width="0.40" height="4.20" fill="#ddd"/>
<rect x="564.90" y="492.05" width="2.50" height="0.40" fill="#ddd"/>
<circle cx="566.10" cy="479.55" r="2.90" fill="#555" filter="url(#bl2)" opacity="0.4"/>
<circle cx="566.30" cy="479.05" r="2.60" fill="#0b6fc9"/>
<rect x="565.70" y="478.15" width="1.20" height="1.80" fill="#d6e8fa" opacity="0.62"/>
<circle cx="555.90" cy="492.85" r="2.90" fill="#555" filter="url(#bl2)" opacity="0.4"/>
<circle cx="556.10" cy="492.35" r="2.60" fill="#0b6fc9"/>
<rect x="555.50" y="491.45" width="1.20" height="1.80" fill="#d6e8fa" opacity="0.62"/>
<circle cx="576.30" cy="492.85" r="2.90" fill="#555" filter="url(#bl2)" opacity="0.4"/>
<circle cx="576.50" cy="492.35" r="2.60" fill="#0b6fc9"/>
<rect x="575.90" y="491.45" width="1.20" height="1.80" fill="#d6e8fa" opacity="0.62"/>
<circle cx="565.80" cy="505.55" r="2.90" fill="#555" filter="url(#bl2)" opacity="0.4"/>
<circle cx="566.00" cy="505.05" r="2.60" fill="#0b6fc9"/>
<rect x="565.40" y="504.15" width="1.20" height="1.80" fill="#d6e8fa" opacity="0.62"/>
<rect x="559.50" y="476.30" width="2.80" height="1.10" fill="#2a7fd0" opacity="0.56"/>
<rect x="556.50" y="478.80" width="5.70" height="1.10" fill="#2a7fd0" opacity="0.56"/>
<rect x="555.00" y="496.60" width="2.30" height="1.10" fill="#2a7fd0" opacity="0.56"/>
<rect x="552.50" y="499.00" width="8.70" height="1.10" fill="#2a7fd0" opacity="0.56"/>
<rect x="574.10" y="484.10" width="3.00" height="1.10" fill="#2a7fd0" opacity="0.56"/>
<rect x="574.10" y="486.30" width="5.00" height="1.10" fill="#2a7fd0" opacity="0.56"/>
<rect x="570.70" y="502.60" width="2.80" height="1.10" fill="#2a7fd0" opacity="0.56"/>
<rect x="570.70" y="504.80" width="5.00" height="1.10" fill="#2a7fd0" opacity="0.56"/>
<rect x="582.70" y="479.40" width="8.00" height="1.10" fill="#333" opacity="0.56"/>
<rect x="582.70" y="482.35" width="19.80" height="6.20" fill="#dcdcdc" opacity="0.6"/>
<rect x="582.70" y="490.85" width="19.80" height="0.80" fill="#3a3a3a" opacity="0.56"/>
<rect x="582.70" y="492.95" width="19.80" height="0.80" fill="#3a3a3a" opacity="0.56"/>
<rect x="582.70" y="495.05" width="19.80" height="0.80" fill="#3a3a3a" opacity="0.56"/>
<rect x="582.70" y="499.35" width="19.80" height="6.50" fill="#d6d6d6" opacity="0.6"/>
<text transform="translate(578.00 531.40) scale(0.980 1)" font-size="6.80" fill="#111" text-anchor="middle" font-weight="bold" textLength="27.14" lengthAdjust="spacingAndGlyphs">选择原因</text>
<rect x="580.70" y="547.10" width="60.50" height="17.50" fill="#4a4a4a" rx="2.00" filter="url(#bl3)" opacity="0.55"/>
<rect x="579.70" y="544.90" width="60.40" height="17.50" fill="url(#gbox)" rx="2.20"/>
<text transform="translate(584.00 550.60) scale(0.700 1)" font-size="3.30" fill="#262626" text-anchor="start" textLength="75.71" lengthAdjust="spacingAndGlyphs">您的内容打在这里，或者通过复制您的文本后，在此框</text>
<text transform="translate(584.00 554.90) scale(0.700 1)" font-size="3.30" fill="#262626" text-anchor="start" textLength="73.57" lengthAdjust="spacingAndGlyphs">中选择粘贴，并选择只保留文字。在此录入上述图</text>
<text transform="translate(584.00 559.20) scale(0.700 1)" font-size="3.30" fill="#262626" text-anchor="start" textLength="27.86" lengthAdjust="spacingAndGlyphs">表的综合描述说明。</text>
<rect x="580.70" y="575.60" width="60.50" height="17.10" fill="#4a4a4a" rx="2.00" filter="url(#bl3)" opacity="0.55"/>
<rect x="579.70" y="573.40" width="60.40" height="17.10" fill="url(#gbox)" rx="2.20"/>
<text transform="translate(584.00 579.10) scale(0.700 1)" font-size="3.30" fill="#262626" text-anchor="start" textLength="75.71" lengthAdjust="spacingAndGlyphs">您的内容打在这里，或者通过复制您的文本后，在此框</text>
<text transform="translate(584.00 583.40) scale(0.700 1)" font-size="3.30" fill="#262626" text-anchor="start" textLength="73.57" lengthAdjust="spacingAndGlyphs">中选择粘贴，并选择只保留文字。在此录入上述图</text>
<text transform="translate(584.00 587.70) scale(0.700 1)" font-size="3.30" fill="#262626" text-anchor="start" textLength="27.86" lengthAdjust="spacingAndGlyphs">表的综合描述说明。</text>
<rect x="580.70" y="602.00" width="60.50" height="18.20" fill="#4a4a4a" rx="2.00" filter="url(#bl3)" opacity="0.55"/>
<rect x="579.70" y="599.80" width="60.40" height="18.20" fill="url(#gbox)" rx="2.20"/>
<text transform="translate(584.00 604.50) scale(0.700 1)" font-size="3.30" fill="#262626" text-anchor="start" textLength="72.86" lengthAdjust="spacingAndGlyphs">您的内容打在这里，或者通过复制您的文本后，在此</text>
<text transform="translate(584.00 608.40) scale(0.700 1)" font-size="3.30" fill="#262626" text-anchor="start" textLength="25.71" lengthAdjust="spacingAndGlyphs">框中选择粘贴文字。</text>
<text transform="translate(584.00 612.30) scale(0.700 1)" font-size="3.30" fill="#262626" text-anchor="start" textLength="75.71" lengthAdjust="spacingAndGlyphs">并选择只保留文字，在此录入上述图表的综合，在此录入</text>
<text transform="translate(584.00 616.20) scale(0.700 1)" font-size="3.30" fill="#262626" text-anchor="start" textLength="37.86" lengthAdjust="spacingAndGlyphs">上述图表的综合描述说明。</text>
<path d="M542.30 571.30L558.00 560.80" stroke="#3a8adb" stroke-width="0.80" stroke-dasharray="1.300 1.300"/>
<path d="M546.50 582.20L557.50 582.20" stroke="#3a8adb" stroke-width="0.80" stroke-dasharray="1.300 1.300"/>
<path d="M542.30 592.80L558.00 603.50" stroke="#3a8adb" stroke-width="0.80" stroke-dasharray="1.300 1.300"/>
<polygon points="511.80,584.50 519.20,567.30 536.80,567.30 544.20,584.50 536.80,601.70 519.20,601.70" fill="#333" filter="url(#bl3)" opacity="0.7"/>
<polygon points="514.00,582.60 521.40,565.40 538.20,565.40 545.60,582.60 538.20,599.80 521.40,599.80" fill="url(#gw)"/>
<text transform="translate(529.80 580.40) scale(0.920 1)" font-size="7.20" fill="#1666b5" text-anchor="middle" font-weight="bold" textLength="14.35" lengthAdjust="spacingAndGlyphs">选择</text>
<text transform="translate(529.80 590.40) scale(0.920 1)" font-size="7.20" fill="#1666b5" text-anchor="middle" font-weight="bold" textLength="14.35" lengthAdjust="spacingAndGlyphs">原因</text>
<polygon points="556.40,554.90 560.00,545.60 571.20,545.60 574.80,554.90 571.20,564.20 560.00,564.20" fill="#333" filter="url(#bl3)" opacity="0.65"/>
<polygon points="557.70,553.40 561.30,544.10 572.10,544.10 575.70,553.40 572.10,562.70 561.30,562.70" fill="url(#gw)"/>
<text transform="translate(566.70 552.50) scale(0.920 1)" font-size="4.70" fill="#1666b5" text-anchor="middle" font-weight="bold" textLength="9.35" lengthAdjust="spacingAndGlyphs">专业</text>
<text transform="translate(566.70 558.50) scale(0.920 1)" font-size="4.70" fill="#1666b5" text-anchor="middle" font-weight="bold" textLength="9.35" lengthAdjust="spacingAndGlyphs">对口</text>
<polygon points="556.40,583.80 560.00,574.50 571.20,574.50 574.80,583.80 571.20,593.10 560.00,593.10" fill="#333" filter="url(#bl3)" opacity="0.65"/>
<polygon points="557.70,582.30 561.30,573.00 572.10,573.00 575.70,582.30 572.10,591.60 561.30,591.60" fill="url(#gw)"/>
<text transform="translate(566.70 581.40) scale(0.920 1)" font-size="4.70" fill="#1666b5" text-anchor="middle" font-weight="bold" textLength="9.35" lengthAdjust="spacingAndGlyphs">靠近</text>
<text transform="translate(566.70 587.40) scale(0.920 1)" font-size="4.70" fill="#1666b5" text-anchor="middle" font-weight="bold" textLength="9.35" lengthAdjust="spacingAndGlyphs">家乡</text>
<polygon points="556.40,610.30 560.00,601.00 571.20,601.00 574.80,610.30 571.20,619.60 560.00,619.60" fill="#333" filter="url(#bl3)" opacity="0.65"/>
<polygon points="557.70,608.80 561.30,599.50 572.10,599.50 575.70,608.80 572.10,618.10 561.30,618.10" fill="url(#gw)"/>
<text transform="translate(566.70 607.90) scale(0.920 1)" font-size="4.70" fill="#1666b5" text-anchor="middle" font-weight="bold" textLength="9.35" lengthAdjust="spacingAndGlyphs">提供</text>
<text transform="translate(566.70 613.90) scale(0.920 1)" font-size="4.70" fill="#1666b5" text-anchor="middle" font-weight="bold" textLength="9.35" lengthAdjust="spacingAndGlyphs">机遇</text>
</g></g>
</svg></div>
<!-- window border -->
<div class="abs" id="x904" style="left:904px;top:31px;width:1px;height:86px;background:#c4c0bc"></div>
<div class="abs" style="left:0;top:31px;width:1px;height:652px;background:#0078d7"></div>
<div class="abs" style="left:905px;top:31px;width:1px;height:652px;background:#0078d7"></div>
<div class="abs" style="left:0;top:682px;width:906px;height:1px;background:#0078d7"></div>
</div>
</body>
</html>
